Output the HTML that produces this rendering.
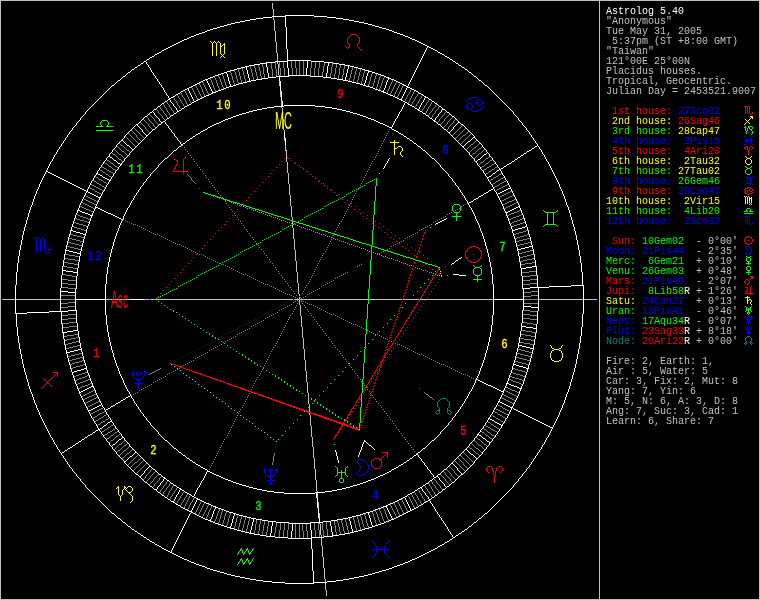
<!DOCTYPE html>
<html><head><meta charset="utf-8"><title>Astrolog 5.40</title>
<style>
html,body{margin:0;padding:0;background:#000;overflow:hidden}
#w{position:relative;width:760px;height:600px;background:#000;overflow:hidden;font-family:"Liberation Mono",monospace}
svg{position:absolute;left:0;top:0;will-change:transform}
#s{position:absolute;left:0;top:0;width:760px;height:600px;will-change:transform}
svg path,svg circle,svg rect{fill:none;stroke-width:1;shape-rendering:crispEdges}
svg text.hn{font:13.6px "Liberation Mono",monospace;letter-spacing:2.1px;stroke-width:.35px;paint-order:stroke}
svg text.ang{font:24.7px "Liberation Sans",sans-serif}
.l{position:absolute;left:606px;height:10px;font:10px/10px "Liberation Mono",monospace;white-space:pre;color:#c0c0c0}
</style></head><body><div id="w">
<svg width="760" height="600" viewBox="0 0 760 600" shape-rendering="crispEdges">
<path transform="translate(0 .5)" stroke="#c0c0c0" d="M2 299h595"/>
<path transform="translate(.5 0)" stroke="#c0c0c0" d="M272 3v6M273 9v11M274 20v11M275 31v11M276 42v11M277 53v11M278 64v11M279 75v11M280 86v11M281 97v11M282 108v11M283 119v11M284 130v11M285 141v10M286 151v11M287 162v11M288 173v11M289 184v11M290 195v11M291 206v11M292 217v11M293 228v11M294 239v11M295 250v11M296 261v11M297 272v11M298 283v11M299 294v11M300 305v11M301 316v11M302 327v11M303 338v11M304 349v11M305 360v11M306 371v11M307 382v11M308 393v11M309 404v11M310 415v11M311 426v11M312 437v10M313 447v11M314 458v11M315 469v11M316 480v11M317 491v11M318 502v11M319 513v11M320 524v11M321 535v11M322 546v11M323 557v11M324 568v11M325 579v11M326 590v6"/>
<path transform="translate(.5 0)" stroke="#fff" d="M421 488v1M422 489v2M423 491v1M424 492v1M425 493v2M426 495v1M427 496v1M428 497v2M429 499v1"/>
<path transform="translate(.5 0)" stroke="#808080" d="M424 485v1M425 486v2M426 488v1M427 489v2M428 491v1M429 492v2M430 494v1M431 495v2M432 497v1M428 483v1M429 484v2M430 486v1M431 487v2M432 489v2M433 491v1M434 492v2M435 494v1M431 481v1M432 482v2M433 484v1M434 485v1M435 486v2M436 488v1M437 489v1M438 490v2M439 492v1M434 479v1M435 480v1M436 481v2M437 483v1M438 484v1M439 485v1M440 486v2M441 488v1M442 489v1"/>
<path transform="translate(.5 0)" stroke="#fff" d="M437 476v1M438 477v1M439 478v2M440 480v1M441 481v1M442 482v1M443 483v1M444 484v2M445 486v1M446 487v1"/>
<path transform="translate(.5 0)" stroke="#808080" d="M440 474v1M441 475v1M442 476v1M443 477v1M444 478v1M445 479v2M446 481v1M447 482v1M448 483v1M449 484v1M443 471v1M444 472v1M445 473v2M446 475v1M447 476v1M448 477v1M449 478v1M450 479v2M451 481v1M452 482v1M446 469v1M447 470v1M448 471v1M449 472v1M450 473v1M451 474v2M452 476v1M453 477v1M454 478v1M455 479v1M449 466v1M450 467v1M451 468v1M452 469v1M453 470v1M454 471v2M455 473v1M456 474v1M457 475v1M458 476v1"/>
<path transform="translate(.5 0)" stroke="#fff" d="M452 463v1M453 464v1M454 465v1M455 466v1M456 467v1M457 468v2M458 470v1M459 471v1M460 472v1M461 473v1"/>
<path transform="translate(0 .5)" stroke="#808080" d="M455 461h1M456 462h1M457 463h1M458 464h1M459 465h1M460 466h1M461 467h1M462 468h1M463 469h1M464 470h1"/>
<path transform="translate(.5 0)" stroke="#808080" d="M458 458v1M459 459v1M460 460v1M461 461v1M462 462v1M463 463v2M464 465v1M465 466v1M466 467v1M467 468v1"/>
<path transform="translate(0 .5)" stroke="#808080" d="M460 455h1M461 456h1M462 457h1M463 458h1M464 459h1M465 460h1M466 461h1M467 462h1M468 463h1M469 464h1M470 465h1M463 452h1M464 453h1M465 454h1M466 455h1M467 456h1M468 457h1M469 458h1M470 459h1M471 460h1M472 461h1M473 462h1"/>
<path transform="translate(0 .5)" stroke="#fff" d="M466 449h1M467 450h1M468 451h1M469 452h1M470 453h1M471 454h2M473 455h1M474 456h1M475 457h1M476 458h1"/>
<path transform="translate(0 .5)" stroke="#808080" d="M468 446h1M469 447h1M470 448h2M472 449h1M473 450h1M474 451h1M475 452h1M476 453h2M478 454h1M479 455h1M471 443h1M472 444h1M473 445h1M474 446h1M475 447h1M476 448h2M478 449h1M479 450h1M480 451h1M481 452h1M474 440h1M475 441h1M476 442h1M477 443h1M478 444h1M479 445h2M481 446h1M482 447h1M483 448h1M484 449h1M476 437h1M477 438h1M478 439h2M480 440h1M481 441h1M482 442h1M483 443h1M484 444h2M486 445h1M487 446h1"/>
<path transform="translate(0 .5)" stroke="#fff" d="M478 434h1M479 435h2M481 436h1M482 437h1M483 438h2M485 439h1M486 440h1M487 441h2M489 442h1"/>
<path transform="translate(0 .5)" stroke="#808080" d="M481 431h1M482 432h2M484 433h1M485 434h1M486 435h2M488 436h1M489 437h1M490 438h2M492 439h1M483 428h1M484 429h2M486 430h1M487 431h1M488 432h2M490 433h1M491 434h1M492 435h2M494 436h1M485 425h1M486 426h2M488 427h2M490 428h1M491 429h2M493 430h2M495 431h2M497 432h1M487 421h1M488 422h2M490 423h1M491 424h2M493 425h1M494 426h2M496 427h1M497 428h2M499 429h1"/>
<path transform="translate(0 .5)" stroke="#fff" d="M489 418h1M490 419h2M492 420h2M494 421h1M495 422h2M497 423h2M499 424h2M501 425h1"/>
<path transform="translate(0 .5)" stroke="#808080" d="M492 415h1M493 416h2M495 417h1M496 418h2M498 419h2M500 420h1M501 421h2M503 422h1M494 411h1M495 412h2M497 413h1M498 414h2M500 415h2M502 416h1M503 417h2M505 418h1M495 408h1M496 409h2M498 410h2M500 411h2M502 412h2M504 413h2M506 414h2M497 404h1M498 405h2M500 406h2M502 407h1M503 408h2M505 409h2M507 410h2M509 411h1"/>
<path transform="translate(0 .5)" stroke="#fff" d="M499 401h1M500 402h2M502 403h2M504 404h2M506 405h2M508 406h2M510 407h2"/>
<path transform="translate(0 .5)" stroke="#808080" d="M501 397h1M502 398h2M504 399h2M506 400h2M508 401h2M510 402h2M512 403h2M503 394h1M504 395h2M506 396h2M508 397h2M510 398h2M512 399h2M514 400h2M504 390h2M506 391h2M508 392h2M510 393h2M512 394h2M514 395h2M516 396h2M506 387h2M508 388h2M510 389h2M512 390h3M515 391h2M517 392h2"/>
<path transform="translate(0 .5)" stroke="#fff" d="M507 383h2M509 384h2M511 385h3M514 386h3M517 387h2M519 388h2"/>
<path transform="translate(0 .5)" stroke="#808080" d="M509 379h2M511 380h2M513 381h3M516 382h3M519 383h2M521 384h2M510 376h2M512 377h3M515 378h4M519 379h3M522 380h2M511 372h2M513 373h3M516 374h4M520 375h3M523 376h2M513 368h2M515 369h3M518 370h4M522 371h3M525 372h2"/>
<path transform="translate(0 .5)" stroke="#fff" d="M514 364h2M516 365h3M519 366h4M523 367h3M526 368h2"/>
<path transform="translate(0 .5)" stroke="#808080" d="M515 361h3M518 362h4M522 363h4M526 364h3M516 357h3M519 358h4M523 359h4M527 360h3M517 353h3M520 354h4M524 355h4M528 356h3M518 349h3M521 350h4M525 351h4M529 352h3"/>
<path transform="translate(0 .5)" stroke="#fff" d="M519 345h3M522 346h4M526 347h4M530 348h3"/>
<path transform="translate(0 .5)" stroke="#808080" d="M520 342h4M524 343h6M530 344h4M520 338h4M524 339h7M531 340h4M521 334h4M525 335h6M531 336h4M522 330h4M526 331h6M532 332h4"/>
<path transform="translate(0 .5)" stroke="#fff" d="M522 326h4M526 327h7M533 328h4"/>
<path transform="translate(0 .5)" stroke="#808080" d="M523 322h4M527 323h6M533 324h4M523 318h7M530 319h8M523 314h7M530 315h8M523 310h7M530 311h8"/>
<path transform="translate(0 .5)" stroke="#fff" d="M524 306h7M531 307h7"/>
<path transform="translate(0 .5)" stroke="#808080" d="M524 303h14M524 299h14M531 295h7M524 296h7M531 291h7M524 292h7"/>
<path transform="translate(0 .5)" stroke="#fff" d="M530 287h8M523 288h7"/>
<path transform="translate(0 .5)" stroke="#808080" d="M530 283h8M523 284h7M530 279h8M523 280h7M530 275h7M523 276h7M529 271h8M522 272h7"/>
<path transform="translate(0 .5)" stroke="#fff" d="M532 266h4M526 267h6M522 268h4"/>
<path transform="translate(0 .5)" stroke="#808080" d="M532 262h4M525 263h7M521 264h4M532 258h3M527 259h5M523 260h4M520 261h3M531 254h3M527 255h4M523 256h4M520 257h3M530 250h3M526 251h4M522 252h4M519 253h3"/>
<path transform="translate(0 .5)" stroke="#fff" d="M529 246h3M525 247h4M521 248h4M518 249h3"/>
<path transform="translate(0 .5)" stroke="#808080" d="M528 242h3M524 243h4M520 244h4M517 245h3M527 238h3M523 239h4M519 240h4M516 241h3M527 234h2M524 235h3M520 236h4M517 237h3M515 238h2M526 230h2M523 231h3M519 232h4M516 233h3M514 234h2"/>
<path transform="translate(0 .5)" stroke="#fff" d="M525 226h2M522 227h3M518 228h4M515 229h3M513 230h2"/>
<path transform="translate(0 .5)" stroke="#808080" d="M523 222h2M520 223h3M517 224h3M514 225h3M512 226h2M522 218h2M520 219h2M517 220h3M514 221h3M512 222h2M510 223h2M521 214h2M519 215h2M516 216h3M513 217h3M511 218h2M509 219h2M519 210h2M517 211h2M514 212h3M511 213h3M509 214h2M507 215h2"/>
<path transform="translate(0 .5)" stroke="#fff" d="M518 206h2M516 207h2M514 208h2M512 209h2M510 210h2M508 211h2M506 212h2"/>
<path transform="translate(0 .5)" stroke="#808080" d="M516 202h2M514 203h2M512 204h2M510 205h2M508 206h2M506 207h2M504 208h2M514 199h2M512 200h2M509 201h3M507 202h2M505 203h2M503 204h2M512 195h2M510 196h2M508 197h2M506 198h2M504 199h2M502 200h2M501 201h1M510 191h2M508 192h2M506 193h2M504 194h2M502 195h2M500 196h2M499 197h1"/>
<path transform="translate(0 .5)" stroke="#fff" d="M510 187h1M508 188h2M506 189h2M504 190h2M502 191h2M500 192h2M498 193h2M497 194h1"/>
<path transform="translate(0 .5)" stroke="#808080" d="M507 184h2M505 185h2M503 186h2M501 187h2M499 188h2M497 189h2M496 190h1M506 180h1M504 181h2M502 182h2M500 183h2M499 184h1M497 185h2M495 186h2M494 187h1M503 177h1M501 178h2M500 179h1M498 180h2M496 181h2M495 182h1M493 183h2M492 184h1M501 173h1M499 174h2M498 175h1M496 176h2M494 177h2M493 178h1M491 179h2M490 180h1"/>
<path transform="translate(0 .5)" stroke="#fff" d="M499 169h1M497 170h2M496 171h1M495 172h1M493 173h2M492 174h1M491 175h1M489 176h2M488 177h1"/>
<path transform="translate(0 .5)" stroke="#808080" d="M497 166h1M495 167h2M494 168h1M492 169h2M491 170h1M489 171h2M488 172h1M486 173h2M485 174h1M494 163h1M492 164h2M491 165h1M489 166h2M487 167h2M486 168h1M484 169h2M483 170h1M492 159h1M490 160h2M489 161h1M488 162h1M486 163h2M485 164h1M484 165h1M482 166h2M481 167h1M489 156h1M488 157h1M486 158h2M485 159h1M484 160h1M483 161h1M481 162h2M480 163h1M479 164h1"/>
<path transform="translate(0 .5)" stroke="#fff" d="M487 152h1M486 153h1M484 154h2M483 155h1M482 156h1M481 157h1M480 158h1M478 159h2M477 160h1M476 161h1"/>
<path transform="translate(0 .5)" stroke="#808080" d="M484 149h1M483 150h1M482 151h1M481 152h1M479 153h2M478 154h1M477 155h1M476 156h1M475 157h1M474 158h1M482 146h1M481 147h1M479 148h2M478 149h1M477 150h1M476 151h1M475 152h1M473 153h2M472 154h1M471 155h1M479 143h1M478 144h1M477 145h1M476 146h1M474 147h2M473 148h1M472 149h1M471 150h1M470 151h1M469 152h1M476 140h1M475 141h1M474 142h1M473 143h1M471 144h2M470 145h1M469 146h1M468 147h1M467 148h1M466 149h1"/>
<path transform="translate(0 .5)" stroke="#fff" d="M473 137h1M472 138h1M471 139h1M470 140h1M468 141h2M467 142h1M466 143h1M465 144h1M464 145h1M463 146h1"/>
<path transform="translate(0 .5)" stroke="#808080" d="M470 134h1M469 135h1M468 136h1M467 137h1M466 138h1M465 139h1M464 140h1M463 141h1M462 142h1M461 143h1M468 131h1M467 132h1M466 133h1M465 134h1M463 135h2M462 136h1M461 137h1M460 138h1M459 139h1M458 140h1M465 128h1M464 129h1M463 130h1M462 131h1M461 132h1M460 133h1M459 134h1M458 135h1M457 136h1M456 137h1M455 138h1M462 125h1M461 126h1M460 127h1M459 128h1M458 129h1M457 130h1M456 131h1M455 132h1M454 133h1M453 134h1M452 135h1"/>
<path transform="translate(.5 0)" stroke="#fff" d="M449 132v1M450 131v1M451 130v1M452 129v1M453 127v2M454 126v1M455 125v1M456 124v1M457 123v1M458 122v1"/>
<path transform="translate(.5 0)" stroke="#808080" d="M446 130v1M447 129v1M448 127v2M449 126v1M450 125v1M451 124v1M452 123v1M453 121v2M454 120v1M455 119v1M443 127v1M444 126v1M445 125v1M446 124v1M447 122v2M448 121v1M449 120v1M450 119v1M451 118v1M452 117v1M440 124v1M441 123v1M442 122v1M443 121v1M444 119v2M445 118v1M446 117v1M447 116v1M448 115v1M449 114v1M437 122v1M438 121v1M439 119v2M440 118v1M441 117v1M442 116v1M443 115v1M444 113v2M445 112v1M446 111v1"/>
<path transform="translate(.5 0)" stroke="#fff" d="M434 120v1M435 118v2M436 117v1M437 116v1M438 114v2M439 113v1M440 112v1M441 110v2M442 109v1"/>
<path transform="translate(.5 0)" stroke="#808080" d="M431 117v1M432 115v2M433 114v1M434 113v1M435 111v2M436 110v1M437 109v1M438 107v2M439 106v1M428 115v1M429 113v2M430 112v1M431 111v1M432 109v2M433 108v1M434 107v1M435 105v2M436 104v1M425 113v1M426 111v2M427 109v2M428 107v2M429 106v1M430 104v2M431 102v2M432 101v1M421 111v1M422 109v2M423 108v1M424 106v2M425 105v1M426 103v2M427 102v1M428 100v2M429 99v1"/>
<path transform="translate(.5 0)" stroke="#fff" d="M418 109v1M419 107v2M420 105v2M421 103v2M422 102v1M423 100v2M424 98v2M425 97v1"/>
<path transform="translate(.5 0)" stroke="#808080" d="M415 106v1M416 104v2M417 103v1M418 101v2M419 99v2M420 98v1M421 96v2M422 95v1M411 104v1M412 102v2M413 101v1M414 99v2M415 97v2M416 96v1M417 94v2M418 93v1M408 102v2M409 100v2M410 98v2M411 96v2M412 94v2M413 92v2M414 91v1M404 101v1M405 99v2M406 97v2M407 95v2M408 94v1M409 92v2M410 90v2M411 89v1"/>
<path transform="translate(.5 0)" stroke="#fff" d="M401 98v2M402 96v2M403 94v2M404 92v2M405 90v2M406 88v2M407 87v1"/>
<path transform="translate(.5 0)" stroke="#808080" d="M397 96v2M398 94v2M399 92v2M400 90v2M401 88v2M402 86v2M403 85v1M394 94v2M395 92v2M396 90v2M397 88v2M398 86v2M399 84v2M400 83v1M390 93v2M391 91v2M392 89v2M393 87v2M394 85v2M395 83v2M396 81v2M387 91v2M388 89v2M389 86v3M390 84v2M391 82v2M392 80v2"/>
<path transform="translate(.5 0)" stroke="#fff" d="M383 90v2M384 88v2M385 85v3M386 82v3M387 80v2M388 78v2"/>
<path transform="translate(.5 0)" stroke="#808080" d="M379 88v2M380 86v2M381 83v3M382 80v3M383 78v2M384 76v2M376 87v2M377 84v3M378 80v4M379 77v3M380 75v2M372 86v2M373 83v3M374 79v4M375 76v3M376 74v2M368 84v2M369 81v3M370 77v4M371 74v3M372 72v2"/>
<path transform="translate(.5 0)" stroke="#fff" d="M364 83v2M365 80v3M366 76v4M367 73v3M368 71v2"/>
<path transform="translate(.5 0)" stroke="#808080" d="M361 81v3M362 77v4M363 73v4M364 70v3M357 80v3M358 76v4M359 72v4M360 69v3M353 79v3M354 75v4M355 71v4M356 68v3M349 78v3M350 74v4M351 70v4M352 67v3"/>
<path transform="translate(.5 0)" stroke="#fff" d="M345 77v3M346 73v4M347 69v4M348 66v3"/>
<path transform="translate(.5 0)" stroke="#808080" d="M342 75v4M343 69v6M344 65v4M338 75v4M339 68v7M340 64v4M334 74v4M335 68v6M336 64v4M330 73v4M331 67v6M332 63v4"/>
<path transform="translate(.5 0)" stroke="#fff" d="M326 73v4M327 66v7M328 62v4"/>
<path transform="translate(.5 0)" stroke="#808080" d="M322 72v4M323 66v6M324 62v4M318 68v8M319 61v7M314 68v8M315 61v7M310 68v8M311 61v7"/>
<path transform="translate(.5 0)" stroke="#fff" d="M306 68v7M307 61v7"/>
<path transform="translate(.5 0)" stroke="#808080" d="M303 61v14M299 61v14M295 61v7M296 68v7M291 61v7M292 68v7"/>
<path transform="translate(.5 0)" stroke="#fff" d="M287 61v7M288 68v8"/>
<path transform="translate(.5 0)" stroke="#808080" d="M283 61v7M284 68v8M279 61v7M280 68v8M275 62v7M276 69v7M271 62v7M272 69v8"/>
<path transform="translate(.5 0)" stroke="#fff" d="M266 63v4M267 67v6M268 73v4"/>
<path transform="translate(.5 0)" stroke="#808080" d="M262 63v4M263 67v7M264 74v4M258 64v3M259 67v4M260 71v5M261 76v3M254 65v3M255 68v4M256 72v4M257 76v3M250 66v3M251 69v4M252 73v4M253 77v3"/>
<path transform="translate(.5 0)" stroke="#fff" d="M246 67v3M247 70v4M248 74v4M249 78v3"/>
<path transform="translate(.5 0)" stroke="#808080" d="M242 68v3M243 71v4M244 75v4M245 79v3M238 69v3M239 72v4M240 76v4M241 80v3M234 70v2M235 72v3M236 75v4M237 79v3M238 82v2M230 71v2M231 73v3M232 76v4M233 80v3M234 83v2"/>
<path transform="translate(.5 0)" stroke="#fff" d="M226 72v2M227 74v3M228 77v4M229 81v3M230 84v2"/>
<path transform="translate(.5 0)" stroke="#808080" d="M222 74v2M223 76v3M224 79v3M225 82v3M226 85v2M218 75v2M219 77v2M220 79v3M221 82v3M222 85v2M223 87v2M214 76v2M215 78v2M216 80v3M217 83v3M218 86v2M219 88v2M210 78v2M211 80v2M212 82v3M213 85v3M214 88v2M215 90v2"/>
<path transform="translate(.5 0)" stroke="#fff" d="M206 79v2M207 81v2M208 83v2M209 85v2M210 87v2M211 89v2M212 91v2"/>
<path transform="translate(.5 0)" stroke="#808080" d="M202 81v2M203 83v2M204 85v2M205 87v2M206 89v2M207 91v2M208 93v2M199 83v2M200 85v2M201 87v2M202 89v3M203 92v2M204 94v2M195 85v1M196 86v2M197 88v2M198 90v2M199 92v2M200 94v2M201 96v2M191 87v1M192 88v2M193 90v2M194 92v2M195 94v2M196 96v2M197 98v2"/>
<path transform="translate(.5 0)" stroke="#fff" d="M187 88v1M188 89v2M189 91v2M190 93v2M191 95v2M192 97v2M193 99v2M194 101v1"/>
<path transform="translate(.5 0)" stroke="#808080" d="M184 90v1M185 91v2M186 93v2M187 95v2M188 97v2M189 99v2M190 101v2M180 92v1M181 93v2M182 95v2M183 97v1M184 98v2M185 100v2M186 102v2M187 104v1M177 95v1M178 96v2M179 98v1M180 99v2M181 101v2M182 103v1M183 104v2M184 106v1M173 97v1M174 98v2M175 100v1M176 101v2M177 103v2M178 105v1M179 106v2M180 108v1"/>
<path transform="translate(.5 0)" stroke="#fff" d="M169 99v1M170 100v2M171 102v1M172 103v1M173 104v2M174 106v1M175 107v1M176 108v2M177 110v1"/>
<path transform="translate(.5 0)" stroke="#808080" d="M166 101v1M167 102v2M168 104v1M169 105v2M170 107v1M171 108v2M172 110v1M173 111v2M174 113v1M163 104v1M164 105v2M165 107v1M166 108v2M167 110v2M168 112v1M169 113v2M170 115v1M159 106v1M160 107v2M161 109v1M162 110v1M163 111v2M164 113v1M165 114v1M166 115v2M167 117v1M156 109v1M157 110v1M158 111v2M159 113v1M160 114v1M161 115v1M162 116v2M163 118v1M164 119v1"/>
<path transform="translate(.5 0)" stroke="#fff" d="M152 111v1M153 112v1M154 113v2M155 115v1M156 116v1M157 117v1M158 118v1M159 119v2M160 121v1M161 122v1"/>
<path transform="translate(.5 0)" stroke="#808080" d="M149 114v1M150 115v1M151 116v1M152 117v1M153 118v1M154 119v2M155 121v1M156 122v1M157 123v1M158 124v1M146 116v1M147 117v1M148 118v2M149 120v1M150 121v1M151 122v1M152 123v1M153 124v2M154 126v1M155 127v1M143 119v1M144 120v1M145 121v1M146 122v1M147 123v1M148 124v2M149 126v1M150 127v1M151 128v1M152 129v1M140 122v1M141 123v1M142 124v1M143 125v1M144 126v1M145 127v2M146 129v1M147 130v1M148 131v1M149 132v1"/>
<path transform="translate(.5 0)" stroke="#fff" d="M137 125v1M138 126v1M139 127v1M140 128v1M141 129v1M142 130v2M143 132v1M144 133v1M145 134v1M146 135v1"/>
<path transform="translate(0 .5)" stroke="#808080" d="M134 128h1M135 129h1M136 130h1M137 131h1M138 132h1M139 133h1M140 134h1M141 135h1M142 136h1M143 137h1"/>
<path transform="translate(.5 0)" stroke="#808080" d="M131 130v1M132 131v1M133 132v1M134 133v1M135 134v1M136 135v2M137 137v1M138 138v1M139 139v1M140 140v1"/>
<path transform="translate(0 .5)" stroke="#808080" d="M128 133h1M129 134h1M130 135h1M131 136h1M132 137h1M133 138h1M134 139h1M135 140h1M136 141h1M137 142h1M138 143h1M125 136h1M126 137h1M127 138h1M128 139h1M129 140h1M130 141h1M131 142h1M132 143h1M133 144h1M134 145h1M135 146h1"/>
<path transform="translate(0 .5)" stroke="#fff" d="M122 140h1M123 141h1M124 142h1M125 143h1M126 144h1M127 145h2M129 146h1M130 147h1M131 148h1M132 149h1"/>
<path transform="translate(0 .5)" stroke="#808080" d="M119 143h1M120 144h1M121 145h2M123 146h1M124 147h1M125 148h1M126 149h1M127 150h2M129 151h1M130 152h1M117 146h1M118 147h1M119 148h1M120 149h1M121 150h1M122 151h2M124 152h1M125 153h1M126 154h1M127 155h1M114 149h1M115 150h1M116 151h1M117 152h1M118 153h1M119 154h2M121 155h1M122 156h1M123 157h1M124 158h1M111 152h1M112 153h1M113 154h2M115 155h1M116 156h1M117 157h1M118 158h1M119 159h2M121 160h1M122 161h1"/>
<path transform="translate(0 .5)" stroke="#fff" d="M109 156h1M110 157h2M112 158h1M113 159h1M114 160h2M116 161h1M117 162h1M118 163h2M120 164h1"/>
<path transform="translate(0 .5)" stroke="#808080" d="M106 159h1M107 160h2M109 161h1M110 162h1M111 163h2M113 164h1M114 165h1M115 166h2M117 167h1M104 162h1M105 163h2M107 164h1M108 165h1M109 166h2M111 167h1M112 168h1M113 169h2M115 170h1M101 166h1M102 167h2M104 168h2M106 169h1M107 170h2M109 171h2M111 172h2M113 173h1M99 169h1M100 170h2M102 171h1M103 172h2M105 173h1M106 174h2M108 175h1M109 176h2M111 177h1"/>
<path transform="translate(0 .5)" stroke="#fff" d="M97 173h1M98 174h2M100 175h2M102 176h1M103 177h2M105 178h2M107 179h2M109 180h1"/>
<path transform="translate(0 .5)" stroke="#808080" d="M95 176h1M96 177h2M98 178h1M99 179h2M101 180h2M103 181h1M104 182h2M106 183h1M93 180h1M94 181h2M96 182h1M97 183h2M99 184h2M101 185h1M102 186h2M104 187h1M91 184h1M92 185h2M94 186h2M96 187h2M98 188h2M100 189h2M102 190h2M89 187h1M90 188h2M92 189h2M94 190h1M95 191h2M97 192h2M99 193h2M101 194h1"/>
<path transform="translate(0 .5)" stroke="#fff" d="M87 191h1M88 192h2M90 193h2M92 194h2M94 195h2M96 196h2M98 197h2"/>
<path transform="translate(0 .5)" stroke="#808080" d="M85 195h1M86 196h2M88 197h2M90 198h2M92 199h2M94 200h2M96 201h2M83 198h1M84 199h2M86 200h2M88 201h2M90 202h2M92 203h2M94 204h2M81 202h2M83 203h2M85 204h2M87 205h2M89 206h2M91 207h2M93 208h2M80 206h2M82 207h2M84 208h2M86 209h3M89 210h2M91 211h2"/>
<path transform="translate(0 .5)" stroke="#fff" d="M78 210h2M80 211h2M82 212h3M85 213h3M88 214h2M90 215h2"/>
<path transform="translate(0 .5)" stroke="#808080" d="M76 214h2M78 215h2M80 216h3M83 217h3M86 218h2M88 219h2M75 218h2M77 219h3M80 220h4M84 221h3M87 222h2M74 222h2M76 223h3M79 224h4M83 225h3M86 226h2M72 226h2M74 227h3M77 228h4M81 229h3M84 230h2"/>
<path transform="translate(0 .5)" stroke="#fff" d="M71 230h2M73 231h3M76 232h4M80 233h3M83 234h2"/>
<path transform="translate(0 .5)" stroke="#808080" d="M70 234h3M73 235h4M77 236h4M81 237h3M69 238h3M72 239h4M76 240h4M80 241h3M68 242h3M71 243h4M75 244h4M79 245h3M67 246h3M70 247h4M74 248h4M78 249h3"/>
<path transform="translate(0 .5)" stroke="#fff" d="M66 250h3M69 251h4M73 252h4M77 253h3"/>
<path transform="translate(0 .5)" stroke="#808080" d="M65 254h4M69 255h6M75 256h4M64 258h4M68 259h7M75 260h4M64 262h4M68 263h6M74 264h4M63 266h4M67 267h6M73 268h4"/>
<path transform="translate(0 .5)" stroke="#fff" d="M62 270h4M66 271h7M73 272h4"/>
<path transform="translate(0 .5)" stroke="#808080" d="M62 274h4M66 275h6M72 276h4M61 279h7M68 280h8M61 283h7M68 284h8M61 287h7M68 288h8"/>
<path transform="translate(0 .5)" stroke="#fff" d="M61 291h7M68 292h7"/>
<path transform="translate(0 .5)" stroke="#808080" d="M61 295h14M61 299h14M68 302h7M61 303h7M68 306h7M61 307h7"/>
<path transform="translate(0 .5)" stroke="#fff" d="M68 310h8M61 311h7"/>
<path transform="translate(0 .5)" stroke="#808080" d="M68 314h8M61 315h7M68 318h8M61 319h7M69 322h7M62 323h7M69 326h8M62 327h7"/>
<path transform="translate(0 .5)" stroke="#fff" d="M73 330h4M67 331h6M63 332h4"/>
<path transform="translate(0 .5)" stroke="#808080" d="M74 334h4M67 335h7M63 336h4M76 337h3M71 338h5M67 339h4M64 340h3M76 341h3M72 342h4M68 343h4M65 344h3M77 345h3M73 346h4M69 347h4M66 348h3"/>
<path transform="translate(0 .5)" stroke="#fff" d="M78 349h3M74 350h4M70 351h4M67 352h3"/>
<path transform="translate(0 .5)" stroke="#808080" d="M79 353h3M75 354h4M71 355h4M68 356h3M80 357h3M76 358h4M72 359h4M69 360h3M82 360h2M79 361h3M75 362h4M72 363h3M70 364h2M83 364h2M80 365h3M76 366h4M73 367h3M71 368h2"/>
<path transform="translate(0 .5)" stroke="#fff" d="M84 368h2M81 369h3M77 370h4M74 371h3M72 372h2"/>
<path transform="translate(0 .5)" stroke="#808080" d="M85 372h2M82 373h3M79 374h3M76 375h3M74 376h2M87 375h2M85 376h2M82 377h3M79 378h3M77 379h2M75 380h2M88 379h2M86 380h2M83 381h3M80 382h3M78 383h2M76 384h2M90 383h2M88 384h2M85 385h3M82 386h3M80 387h2M78 388h2"/>
<path transform="translate(0 .5)" stroke="#fff" d="M91 386h2M89 387h2M87 388h2M85 389h2M83 390h2M81 391h2M79 392h2"/>
<path transform="translate(0 .5)" stroke="#808080" d="M93 390h2M91 391h2M89 392h2M87 393h2M85 394h2M83 395h2M81 396h2M94 394h2M92 395h2M89 396h3M87 397h2M85 398h2M83 399h2M96 397h2M94 398h2M92 399h2M90 400h2M88 401h2M86 402h2M85 403h1M98 401h2M96 402h2M94 403h2M92 404h2M90 405h2M88 406h2M87 407h1"/>
<path transform="translate(0 .5)" stroke="#fff" d="M101 404h1M99 405h2M97 406h2M95 407h2M93 408h2M91 409h2M89 410h2M88 411h1"/>
<path transform="translate(0 .5)" stroke="#808080" d="M101 408h2M99 409h2M97 410h2M95 411h2M93 412h2M91 413h2M90 414h1M104 411h1M102 412h2M100 413h2M98 414h2M97 415h1M95 416h2M93 417h2M92 418h1M106 414h1M104 415h2M103 416h1M101 417h2M99 418h2M98 419h1M96 420h2M95 421h1M108 418h1M106 419h2M105 420h1M103 421h2M101 422h2M100 423h1M98 424h2M97 425h1"/>
<path transform="translate(0 .5)" stroke="#fff" d="M110 421h1M108 422h2M107 423h1M106 424h1M104 425h2M103 426h1M102 427h1M100 428h2M99 429h1"/>
<path transform="translate(0 .5)" stroke="#808080" d="M113 424h1M111 425h2M110 426h1M108 427h2M107 428h1M105 429h2M104 430h1M102 431h2M101 432h1M115 428h1M113 429h2M112 430h1M110 431h2M108 432h2M107 433h1M105 434h2M104 435h1M117 431h1M115 432h2M114 433h1M113 434h1M111 435h2M110 436h1M109 437h1M107 438h2M106 439h1M119 434h1M118 435h1M116 436h2M115 437h1M114 438h1M113 439h1M111 440h2M110 441h1M109 442h1"/>
<path transform="translate(0 .5)" stroke="#fff" d="M122 437h1M121 438h1M119 439h2M118 440h1M117 441h1M116 442h1M115 443h1M113 444h2M112 445h1M111 446h1"/>
<path transform="translate(0 .5)" stroke="#808080" d="M124 440h1M123 441h1M122 442h1M121 443h1M119 444h2M118 445h1M117 446h1M116 447h1M115 448h1M114 449h1M127 443h1M126 444h1M124 445h2M123 446h1M122 447h1M121 448h1M120 449h1M118 450h2M117 451h1M116 452h1M129 446h1M128 447h1M127 448h1M126 449h1M124 450h2M123 451h1M122 452h1M121 453h1M120 454h1M119 455h1M132 449h1M131 450h1M130 451h1M129 452h1M127 453h2M126 454h1M125 455h1M124 456h1M123 457h1M122 458h1"/>
<path transform="translate(0 .5)" stroke="#fff" d="M135 452h1M134 453h1M133 454h1M132 455h1M130 456h2M129 457h1M128 458h1M127 459h1M126 460h1M125 461h1"/>
<path transform="translate(0 .5)" stroke="#808080" d="M137 455h1M136 456h1M135 457h1M134 458h1M133 459h1M132 460h1M131 461h1M130 462h1M129 463h1M128 464h1M140 458h1M139 459h1M138 460h1M137 461h1M135 462h2M134 463h1M133 464h1M132 465h1M131 466h1M130 467h1M143 460h1M142 461h1M141 462h1M140 463h1M139 464h1M138 465h1M137 466h1M136 467h1M135 468h1M134 469h1M133 470h1M146 463h1M145 464h1M144 465h1M143 466h1M142 467h1M141 468h1M140 469h1M139 470h1M138 471h1M137 472h1M136 473h1"/>
<path transform="translate(.5 0)" stroke="#fff" d="M140 476v1M141 475v1M142 474v1M143 473v1M144 471v2M145 470v1M146 469v1M147 468v1M148 467v1M149 466v1"/>
<path transform="translate(.5 0)" stroke="#808080" d="M143 479v1M144 478v1M145 476v2M146 475v1M147 474v1M148 473v1M149 472v1M150 470v2M151 469v1M152 468v1M146 481v1M147 480v1M148 479v1M149 478v1M150 476v2M151 475v1M152 474v1M153 473v1M154 472v1M155 471v1M149 484v1M150 483v1M151 482v1M152 481v1M153 479v2M154 478v1M155 477v1M156 476v1M157 475v1M158 474v1M152 487v1M153 486v1M154 484v2M155 483v1M156 482v1M157 481v1M158 480v1M159 478v2M160 477v1M161 476v1"/>
<path transform="translate(.5 0)" stroke="#fff" d="M156 489v1M157 487v2M158 486v1M159 485v1M160 483v2M161 482v1M162 481v1M163 479v2M164 478v1"/>
<path transform="translate(.5 0)" stroke="#808080" d="M159 492v1M160 490v2M161 489v1M162 488v1M163 486v2M164 485v1M165 484v1M166 482v2M167 481v1M162 494v1M163 492v2M164 491v1M165 490v1M166 488v2M167 487v1M168 486v1M169 484v2M170 483v1M166 497v1M167 495v2M168 493v2M169 491v2M170 490v1M171 488v2M172 486v2M173 485v1M169 499v1M170 497v2M171 496v1M172 494v2M173 493v1M174 491v2M175 490v1M176 488v2M177 487v1"/>
<path transform="translate(.5 0)" stroke="#fff" d="M173 501v1M174 499v2M175 497v2M176 495v2M177 494v1M178 492v2M179 490v2M180 489v1"/>
<path transform="translate(.5 0)" stroke="#808080" d="M176 503v1M177 501v2M178 500v1M179 498v2M180 496v2M181 495v1M182 493v2M183 492v1M180 505v1M181 503v2M182 502v1M183 500v2M184 498v2M185 497v1M186 495v2M187 494v1M184 506v2M185 504v2M186 502v2M187 500v2M188 498v2M189 496v2M190 495v1M187 509v1M188 507v2M189 505v2M190 503v2M191 502v1M192 500v2M193 498v2M194 497v1"/>
<path transform="translate(.5 0)" stroke="#fff" d="M191 510v2M192 508v2M193 506v2M194 504v2M195 502v2M196 500v2M197 499v1"/>
<path transform="translate(.5 0)" stroke="#808080" d="M195 512v2M196 510v2M197 508v2M198 506v2M199 504v2M200 502v2M201 501v1M198 514v2M199 512v2M200 510v2M201 508v2M202 506v2M203 504v2M204 503v1M202 516v2M203 514v2M204 512v2M205 510v2M206 508v2M207 506v2M208 504v2M206 517v2M207 515v2M208 512v3M209 510v2M210 508v2M211 506v2"/>
<path transform="translate(.5 0)" stroke="#fff" d="M210 519v2M211 517v2M212 514v3M213 511v3M214 509v2M215 507v2"/>
<path transform="translate(.5 0)" stroke="#808080" d="M214 521v2M215 519v2M216 516v3M217 513v3M218 511v2M219 509v2M218 522v2M219 519v3M220 515v4M221 512v3M222 510v2M222 523v2M223 520v3M224 516v4M225 513v3M226 511v2M226 525v2M227 522v3M228 518v4M229 515v3M230 513v2"/>
<path transform="translate(.5 0)" stroke="#fff" d="M230 526v2M231 523v3M232 519v4M233 516v3M234 514v2"/>
<path transform="translate(.5 0)" stroke="#808080" d="M234 526v3M235 522v4M236 518v4M237 515v3M238 527v3M239 523v4M240 519v4M241 516v3M242 528v3M243 524v4M244 520v4M245 517v3M246 529v3M247 525v4M248 521v4M249 518v3"/>
<path transform="translate(.5 0)" stroke="#fff" d="M250 530v3M251 526v4M252 522v4M253 519v3"/>
<path transform="translate(.5 0)" stroke="#808080" d="M254 530v4M255 524v6M256 520v4M258 531v4M259 524v7M260 520v4M262 531v4M263 525v6M264 521v4M266 532v4M267 526v6M268 522v4"/>
<path transform="translate(.5 0)" stroke="#fff" d="M270 533v4M271 526v7M272 522v4"/>
<path transform="translate(.5 0)" stroke="#808080" d="M274 533v4M275 527v6M276 523v4M279 530v8M280 523v7M283 530v8M284 523v7M287 530v8M288 523v7"/>
<path transform="translate(.5 0)" stroke="#fff" d="M291 531v7M292 524v7"/>
<path transform="translate(.5 0)" stroke="#808080" d="M295 524v14M299 524v14M302 524v7M303 531v7M306 524v7M307 531v7"/>
<path transform="translate(.5 0)" stroke="#fff" d="M310 523v7M311 530v8"/>
<path transform="translate(.5 0)" stroke="#808080" d="M314 523v7M315 530v8M318 523v7M319 530v8M322 523v7M323 530v7M326 522v7M327 529v8"/>
<path transform="translate(.5 0)" stroke="#fff" d="M330 522v4M331 526v6M332 532v4"/>
<path transform="translate(.5 0)" stroke="#808080" d="M334 521v4M335 525v7M336 532v4M337 520v3M338 523v4M339 527v5M340 532v3M341 520v3M342 523v4M343 527v4M344 531v3M345 519v3M346 522v4M347 526v4M348 530v3"/>
<path transform="translate(.5 0)" stroke="#fff" d="M349 518v3M350 521v4M351 525v4M352 529v3"/>
<path transform="translate(.5 0)" stroke="#808080" d="M353 517v3M354 520v4M355 524v4M356 528v3M357 516v3M358 519v4M359 523v4M360 527v3M360 515v2M361 517v3M362 520v4M363 524v3M364 527v2M364 514v2M365 516v3M366 519v4M367 523v3M368 526v2"/>
<path transform="translate(.5 0)" stroke="#fff" d="M368 513v2M369 515v3M370 518v4M371 522v3M372 525v2"/>
<path transform="translate(.5 0)" stroke="#808080" d="M372 512v2M373 514v3M374 517v3M375 520v3M376 523v2M375 510v2M376 512v2M377 514v3M378 517v3M379 520v2M380 522v2M379 509v2M380 511v2M381 513v3M382 516v3M383 519v2M384 521v2M383 507v2M384 509v2M385 511v3M386 514v3M387 517v2M388 519v2"/>
<path transform="translate(.5 0)" stroke="#fff" d="M386 506v2M387 508v2M388 510v2M389 512v2M390 514v2M391 516v2M392 518v2"/>
<path transform="translate(.5 0)" stroke="#808080" d="M390 504v2M391 506v2M392 508v2M393 510v2M394 512v2M395 514v2M396 516v2M394 503v2M395 505v2M396 507v2M397 509v3M398 512v2M399 514v2M397 501v1M398 502v2M399 504v2M400 506v2M401 508v2M402 510v2M403 512v2M401 499v1M402 500v2M403 502v2M404 504v2M405 506v2M406 508v2M407 510v2"/>
<path transform="translate(.5 0)" stroke="#fff" d="M404 497v1M405 498v2M406 500v2M407 502v2M408 504v2M409 506v2M410 508v2M411 510v1"/>
<path transform="translate(.5 0)" stroke="#808080" d="M408 496v1M409 497v2M410 499v2M411 501v2M412 503v2M413 505v2M414 507v2M411 494v1M412 495v2M413 497v2M414 499v1M415 500v2M416 502v2M417 504v2M418 506v1M414 492v1M415 493v2M416 495v1M417 496v2M418 498v2M419 500v1M420 501v2M421 503v1M418 490v1M419 491v2M420 493v1M421 494v2M422 496v2M423 498v1M424 499v2M425 501v1"/>
<path transform="translate(0 .5)" stroke="#fff" d="M285 15h29M272 16h13M314 16h13M263 17h9M327 17h9M256 18h7M336 18h7M250 19h6M343 19h6M245 20h5M349 20h5M240 21h5M354 21h5M235 22h5M359 22h5M231 23h4M364 23h4M227 24h4M368 24h4M224 25h3M372 25h3M220 26h4M375 26h4M217 27h3M379 27h3M213 28h4M382 28h4M210 29h3M386 29h3M207 30h3M389 30h3M205 31h2M392 31h2M202 32h3M394 32h3M199 33h3M397 33h3M196 34h3M400 34h3M194 35h2M403 35h2M191 36h3M405 36h3M189 37h2M408 37h2M187 38h2M410 38h2M184 39h3M412 39h3M182 40h2M415 40h2M180 41h2M417 41h2M178 42h2M419 42h2M176 43h2M421 43h2M174 44h2M423 44h2M172 45h2M425 45h2M170 46h2M427 46h2M168 47h2M429 47h2M166 48h2M431 48h2M164 49h2M433 49h2M162 50h2M435 50h2M161 51h1M437 51h1M159 52h2M438 52h2M157 53h2M440 53h2M155 54h2M442 54h2M154 55h1M444 55h1M152 56h2M445 56h2M150 57h2M447 57h2M149 58h1M449 58h1M147 59h2M450 59h2M146 60h1M452 60h1M144 61h2M453 61h2M143 62h1M455 62h1M141 63h2M456 63h2M140 64h1M458 64h1M138 65h2M459 65h2M137 66h1M461 66h1M135 67h2M462 67h2M134 68h1M464 68h1M132 69h2M465 69h2M131 70h1M467 70h1M130 71h1M468 71h1M128 72h2M469 72h2M127 73h1M471 73h1M126 74h1M472 74h1M125 75h1M473 75h1M123 76h2M474 76h2M122 77h1M476 77h1M121 78h1M477 78h1M120 79h1M478 79h1M118 80h2M479 80h2M117 81h1M481 81h1M116 82h1M482 82h1M115 83h1M483 83h1M114 84h1M484 84h1M112 85h2M485 85h2M111 86h1M487 86h1M110 87h1M488 87h1M109 88h1M489 88h1M108 89h1M490 89h1M107 90h1M491 90h1M106 91h1M492 91h1M105 92h1M493 92h1M104 93h1M494 93h1M103 94h1M495 94h1M102 95h1M496 95h1M101 96h1M497 96h1M100 97h1M498 97h1M99 98h1M499 98h1M99 500h1M499 500h1M100 501h1M498 501h1M101 502h1M497 502h1M102 503h1M496 503h1M103 504h1M495 504h1M104 505h1M494 505h1M105 506h1M493 506h1M106 507h1M492 507h1M107 508h1M491 508h1M108 509h1M490 509h1M109 510h1M489 510h1M110 511h1M488 511h1M111 512h1M487 512h1M112 513h2M485 513h2M114 514h1M484 514h1M115 515h1M483 515h1M116 516h1M482 516h1M117 517h1M481 517h1M118 518h2M479 518h2M120 519h1M478 519h1M121 520h1M477 520h1M122 521h1M476 521h1M123 522h2M474 522h2M125 523h1M473 523h1M126 524h1M472 524h1M127 525h1M471 525h1M128 526h2M469 526h2M130 527h1M468 527h1M131 528h1M467 528h1M132 529h2M465 529h2M134 530h1M464 530h1M135 531h2M462 531h2M137 532h1M461 532h1M138 533h2M459 533h2M140 534h1M458 534h1M141 535h2M456 535h2M143 536h1M455 536h1M144 537h2M453 537h2M146 538h1M452 538h1M147 539h2M450 539h2M149 540h1M449 540h1M150 541h2M447 541h2M152 542h2M445 542h2M154 543h1M444 543h1M155 544h2M442 544h2M157 545h2M440 545h2M159 546h2M438 546h2M161 547h1M437 547h1M162 548h2M435 548h2M164 549h2M433 549h2M166 550h2M431 550h2M168 551h2M429 551h2M170 552h2M427 552h2M172 553h2M425 553h2M174 554h2M423 554h2M176 555h2M421 555h2M178 556h2M419 556h2M180 557h2M417 557h2M182 558h2M415 558h2M184 559h3M412 559h3M187 560h2M410 560h2M189 561h2M408 561h2M191 562h3M405 562h3M194 563h2M403 563h2M196 564h3M400 564h3M199 565h3M397 565h3M202 566h3M394 566h3M205 567h2M392 567h2M207 568h3M389 568h3M210 569h3M386 569h3M213 570h4M382 570h4M217 571h3M379 571h3M220 572h4M375 572h4M224 573h3M372 573h3M227 574h4M368 574h4M231 575h4M364 575h4M235 576h5M359 576h5M240 577h5M354 577h5M245 578h5M349 578h5M250 579h6M343 579h6M256 580h7M336 580h7M263 581h9M327 581h9M272 582h13M314 582h13M285 583h29"/>
<path transform="translate(.5 0)" stroke="#fff" d="M15 285v29M16 272v13M16 314v13M17 263v9M17 327v9M18 256v7M18 336v7M19 250v6M19 343v6M20 245v5M20 349v5M21 240v5M21 354v5M22 235v5M22 359v5M23 231v4M23 364v4M24 227v4M24 368v4M25 224v3M25 372v3M26 220v4M26 375v4M27 217v3M27 379v3M28 213v4M28 382v4M29 210v3M29 386v3M30 207v3M30 389v3M31 205v2M31 392v2M32 202v3M32 394v3M33 199v3M33 397v3M34 196v3M34 400v3M35 194v2M35 403v2M36 191v3M36 405v3M37 189v2M37 408v2M38 187v2M38 410v2M39 184v3M39 412v3M40 182v2M40 415v2M41 180v2M41 417v2M42 178v2M42 419v2M43 176v2M43 421v2M44 174v2M44 423v2M45 172v2M45 425v2M46 170v2M46 427v2M47 168v2M47 429v2M48 166v2M48 431v2M49 164v2M49 433v2M50 162v2M50 435v2M51 161v1M51 437v1M52 159v2M52 438v2M53 157v2M53 440v2M54 155v2M54 442v2M55 154v1M55 444v1M56 152v2M56 445v2M57 150v2M57 447v2M58 149v1M58 449v1M59 147v2M59 450v2M60 146v1M60 452v1M61 144v2M61 453v2M62 143v1M62 455v1M63 141v2M63 456v2M64 140v1M64 458v1M65 138v2M65 459v2M66 137v1M66 461v1M67 135v2M67 462v2M68 134v1M68 464v1M69 132v2M69 465v2M70 131v1M70 467v1M71 130v1M71 468v1M72 128v2M72 469v2M73 127v1M73 471v1M74 126v1M74 472v1M75 125v1M75 473v1M76 123v2M76 474v2M77 122v1M77 476v1M78 121v1M78 477v1M79 120v1M79 478v1M80 118v2M80 479v2M81 117v1M81 481v1M82 116v1M82 482v1M83 115v1M83 483v1M84 114v1M84 484v1M85 112v2M85 485v2M86 111v1M86 487v1M87 110v1M87 488v1M88 109v1M88 489v1M89 108v1M89 490v1M90 107v1M90 491v1M91 106v1M91 492v1M92 105v1M92 493v1M93 104v1M93 494v1M94 103v1M94 495v1M95 102v1M95 496v1M96 101v1M96 497v1M97 100v1M97 498v1M98 99v1M98 499v1M500 99v1M500 499v1M501 100v1M501 498v1M502 101v1M502 497v1M503 102v1M503 496v1M504 103v1M504 495v1M505 104v1M505 494v1M506 105v1M506 493v1M507 106v1M507 492v1M508 107v1M508 491v1M509 108v1M509 490v1M510 109v1M510 489v1M511 110v1M511 488v1M512 111v1M512 487v1M513 112v2M513 485v2M514 114v1M514 484v1M515 115v1M515 483v1M516 116v1M516 482v1M517 117v1M517 481v1M518 118v2M518 479v2M519 120v1M519 478v1M520 121v1M520 477v1M521 122v1M521 476v1M522 123v2M522 474v2M523 125v1M523 473v1M524 126v1M524 472v1M525 127v1M525 471v1M526 128v2M526 469v2M527 130v1M527 468v1M528 131v1M528 467v1M529 132v2M529 465v2M530 134v1M530 464v1M531 135v2M531 462v2M532 137v1M532 461v1M533 138v2M533 459v2M534 140v1M534 458v1M535 141v2M535 456v2M536 143v1M536 455v1M537 144v2M537 453v2M538 146v1M538 452v1M539 147v2M539 450v2M540 149v1M540 449v1M541 150v2M541 447v2M542 152v2M542 445v2M543 154v1M543 444v1M544 155v2M544 442v2M545 157v2M545 440v2M546 159v2M546 438v2M547 161v1M547 437v1M548 162v2M548 435v2M549 164v2M549 433v2M550 166v2M550 431v2M551 168v2M551 429v2M552 170v2M552 427v2M553 172v2M553 425v2M554 174v2M554 423v2M555 176v2M555 421v2M556 178v2M556 419v2M557 180v2M557 417v2M558 182v2M558 415v2M559 184v3M559 412v3M560 187v2M560 410v2M561 189v2M561 408v2M562 191v3M562 405v3M563 194v2M563 403v2M564 196v3M564 400v3M565 199v3M565 397v3M566 202v3M566 394v3M567 205v2M567 392v2M568 207v3M568 389v3M569 210v3M569 386v3M570 213v4M570 382v4M571 217v3M571 379v3M572 220v4M572 375v4M573 224v3M573 372v3M574 227v4M574 368v4M575 231v4M575 364v4M576 235v5M576 359v5M577 240v5M577 354v5M578 245v5M578 349v5M579 250v6M579 343v6M580 256v7M580 336v7M581 263v9M581 327v9M582 272v13M582 314v13M583 285v29"/>
<path transform="translate(0 .5)" stroke="#fff" d="M288 60h23M275 61h13M311 61h13M266 62h9M324 62h9M260 63h6M333 63h6M254 64h6M339 64h6M249 65h5M345 65h5M245 66h4M350 66h4M241 67h4M354 67h4M237 68h4M358 68h4M234 69h3M362 69h3M230 70h4M365 70h4M227 71h3M369 71h3M224 72h3M372 72h3M221 73h3M375 73h3M218 74h3M378 74h3M215 75h3M381 75h3M213 76h2M384 76h2M210 77h3M386 77h3M208 78h2M389 78h2M205 79h3M391 79h3M203 80h2M394 80h2M201 81h2M396 81h2M199 82h2M398 82h2M197 83h2M400 83h2M195 84h2M402 84h2M193 85h2M404 85h2M191 86h2M406 86h2M189 87h2M408 87h2M187 88h2M410 88h2M185 89h2M412 89h2M183 90h2M414 90h2M181 91h2M416 91h2M180 92h1M418 92h1M178 93h2M419 93h2M176 94h2M421 94h2M175 95h1M423 95h1M173 96h2M424 96h2M171 97h2M426 97h2M170 98h1M428 98h1M168 99h2M429 99h2M167 100h1M431 100h1M165 101h2M432 101h2M164 102h1M434 102h1M162 103h2M435 103h2M161 104h1M437 104h1M160 105h1M438 105h1M158 106h2M439 106h2M157 107h1M441 107h1M156 108h1M442 108h1M154 109h2M443 109h2M153 110h1M445 110h1M152 111h1M446 111h1M150 112h2M447 112h2M149 113h1M449 113h1M148 114h1M450 114h1M147 115h1M451 115h1M145 116h2M452 116h2M144 117h1M454 117h1M143 118h1M455 118h1M142 119h1M456 119h1M141 120h1M457 120h1M140 121h1M458 121h1M139 122h1M459 122h1M138 123h1M460 123h1M136 124h2M461 124h2M135 125h1M463 125h1M134 126h1M464 126h1M133 127h1M465 127h1M132 128h1M466 128h1M131 129h1M467 129h1M130 130h1M468 130h1M130 468h1M468 468h1M131 469h1M467 469h1M132 470h1M466 470h1M133 471h1M465 471h1M134 472h1M464 472h1M135 473h1M463 473h1M136 474h2M461 474h2M138 475h1M460 475h1M139 476h1M459 476h1M140 477h1M458 477h1M141 478h1M457 478h1M142 479h1M456 479h1M143 480h1M455 480h1M144 481h1M454 481h1M145 482h2M452 482h2M147 483h1M451 483h1M148 484h1M450 484h1M149 485h1M449 485h1M150 486h2M447 486h2M152 487h1M446 487h1M153 488h1M445 488h1M154 489h2M443 489h2M156 490h1M442 490h1M157 491h1M441 491h1M158 492h2M439 492h2M160 493h1M438 493h1M161 494h1M437 494h1M162 495h2M435 495h2M164 496h1M434 496h1M165 497h2M432 497h2M167 498h1M431 498h1M168 499h2M429 499h2M170 500h1M428 500h1M171 501h2M426 501h2M173 502h2M424 502h2M175 503h1M423 503h1M176 504h2M421 504h2M178 505h2M419 505h2M180 506h1M418 506h1M181 507h2M416 507h2M183 508h2M414 508h2M185 509h2M412 509h2M187 510h2M410 510h2M189 511h2M408 511h2M191 512h2M406 512h2M193 513h2M404 513h2M195 514h2M402 514h2M197 515h2M400 515h2M199 516h2M398 516h2M201 517h2M396 517h2M203 518h2M394 518h2M205 519h3M391 519h3M208 520h2M389 520h2M210 521h3M386 521h3M213 522h2M384 522h2M215 523h3M381 523h3M218 524h3M378 524h3M221 525h3M375 525h3M224 526h3M372 526h3M227 527h3M369 527h3M230 528h4M365 528h4M234 529h3M362 529h3M237 530h4M358 530h4M241 531h4M354 531h4M245 532h4M350 532h4M249 533h5M345 533h5M254 534h6M339 534h6M260 535h6M333 535h6M266 536h9M324 536h9M275 537h13M311 537h13M288 538h23"/>
<path transform="translate(.5 0)" stroke="#fff" d="M60 288v23M61 275v13M61 311v13M62 266v9M62 324v9M63 260v6M63 333v6M64 254v6M64 339v6M65 249v5M65 345v5M66 245v4M66 350v4M67 241v4M67 354v4M68 237v4M68 358v4M69 234v3M69 362v3M70 230v4M70 365v4M71 227v3M71 369v3M72 224v3M72 372v3M73 221v3M73 375v3M74 218v3M74 378v3M75 215v3M75 381v3M76 213v2M76 384v2M77 210v3M77 386v3M78 208v2M78 389v2M79 205v3M79 391v3M80 203v2M80 394v2M81 201v2M81 396v2M82 199v2M82 398v2M83 197v2M83 400v2M84 195v2M84 402v2M85 193v2M85 404v2M86 191v2M86 406v2M87 189v2M87 408v2M88 187v2M88 410v2M89 185v2M89 412v2M90 183v2M90 414v2M91 181v2M91 416v2M92 180v1M92 418v1M93 178v2M93 419v2M94 176v2M94 421v2M95 175v1M95 423v1M96 173v2M96 424v2M97 171v2M97 426v2M98 170v1M98 428v1M99 168v2M99 429v2M100 167v1M100 431v1M101 165v2M101 432v2M102 164v1M102 434v1M103 162v2M103 435v2M104 161v1M104 437v1M105 160v1M105 438v1M106 158v2M106 439v2M107 157v1M107 441v1M108 156v1M108 442v1M109 154v2M109 443v2M110 153v1M110 445v1M111 152v1M111 446v1M112 150v2M112 447v2M113 149v1M113 449v1M114 148v1M114 450v1M115 147v1M115 451v1M116 145v2M116 452v2M117 144v1M117 454v1M118 143v1M118 455v1M119 142v1M119 456v1M120 141v1M120 457v1M121 140v1M121 458v1M122 139v1M122 459v1M123 138v1M123 460v1M124 136v2M124 461v2M125 135v1M125 463v1M126 134v1M126 464v1M127 133v1M127 465v1M128 132v1M128 466v1M129 131v1M129 467v1M469 131v1M469 467v1M470 132v1M470 466v1M471 133v1M471 465v1M472 134v1M472 464v1M473 135v1M473 463v1M474 136v2M474 461v2M475 138v1M475 460v1M476 139v1M476 459v1M477 140v1M477 458v1M478 141v1M478 457v1M479 142v1M479 456v1M480 143v1M480 455v1M481 144v1M481 454v1M482 145v2M482 452v2M483 147v1M483 451v1M484 148v1M484 450v1M485 149v1M485 449v1M486 150v2M486 447v2M487 152v1M487 446v1M488 153v1M488 445v1M489 154v2M489 443v2M490 156v1M490 442v1M491 157v1M491 441v1M492 158v2M492 439v2M493 160v1M493 438v1M494 161v1M494 437v1M495 162v2M495 435v2M496 164v1M496 434v1M497 165v2M497 432v2M498 167v1M498 431v1M499 168v2M499 429v2M500 170v1M500 428v1M501 171v2M501 426v2M502 173v2M502 424v2M503 175v1M503 423v1M504 176v2M504 421v2M505 178v2M505 419v2M506 180v1M506 418v1M507 181v2M507 416v2M508 183v2M508 414v2M509 185v2M509 412v2M510 187v2M510 410v2M511 189v2M511 408v2M512 191v2M512 406v2M513 193v2M513 404v2M514 195v2M514 402v2M515 197v2M515 400v2M516 199v2M516 398v2M517 201v2M517 396v2M518 203v2M518 394v2M519 205v3M519 391v3M520 208v2M520 389v2M521 210v3M521 386v3M522 213v2M522 384v2M523 215v3M523 381v3M524 218v3M524 378v3M525 221v3M525 375v3M526 224v3M526 372v3M527 227v3M527 369v3M528 230v4M528 365v4M529 234v3M529 362v3M530 237v4M530 358v4M531 241v4M531 354v4M532 245v4M532 350v4M533 249v5M533 345v5M534 254v6M534 339v6M535 260v6M535 333v6M536 266v9M536 324v9M537 275v13M537 311v13M538 288v23"/>
<path transform="translate(0 .5)" stroke="#fff" d="M289 75h21M276 76h13M310 76h13M268 77h8M323 77h8M262 78h6M331 78h6M256 79h6M337 79h6M251 80h5M343 80h5M247 81h4M348 81h4M243 82h4M352 82h4M239 83h4M356 83h4M236 84h3M360 84h3M233 85h3M363 85h3M229 86h4M366 86h4M226 87h3M370 87h3M224 88h2M373 88h2M221 89h3M375 89h3M218 90h3M378 90h3M216 91h2M381 91h2M213 92h3M383 92h3M211 93h2M386 93h2M209 94h2M388 94h2M206 95h3M390 95h3M204 96h2M393 96h2M202 97h2M395 97h2M200 98h2M397 98h2M198 99h2M399 99h2M196 100h2M401 100h2M194 101h2M403 101h2M192 102h2M405 102h2M191 103h1M407 103h1M189 104h2M408 104h2M187 105h2M410 105h2M185 106h2M412 106h2M184 107h1M414 107h1M182 108h2M415 108h2M181 109h1M417 109h1M179 110h2M418 110h2M177 111h2M420 111h2M176 112h1M422 112h1M174 113h2M423 113h2M173 114h1M425 114h1M171 115h2M426 115h2M170 116h1M428 116h1M169 117h1M429 117h1M167 118h2M430 118h2M166 119h1M432 119h1M165 120h1M433 120h1M163 121h2M434 121h2M162 122h1M436 122h1M161 123h1M437 123h1M159 124h2M438 124h2M158 125h1M440 125h1M157 126h1M441 126h1M156 127h1M442 127h1M155 128h1M443 128h1M153 129h2M444 129h2M152 130h1M446 130h1M151 131h1M447 131h1M150 132h1M448 132h1M149 133h1M449 133h1M148 134h1M450 134h1M147 135h1M451 135h1M146 136h1M452 136h1M145 137h1M453 137h1M144 138h1M454 138h1M143 139h1M455 139h1M142 140h1M456 140h1M141 141h1M457 141h1M141 457h1M457 457h1M142 458h1M456 458h1M143 459h1M455 459h1M144 460h1M454 460h1M145 461h1M453 461h1M146 462h1M452 462h1M147 463h1M451 463h1M148 464h1M450 464h1M149 465h1M449 465h1M150 466h1M448 466h1M151 467h1M447 467h1M152 468h1M446 468h1M153 469h2M444 469h2M155 470h1M443 470h1M156 471h1M442 471h1M157 472h1M441 472h1M158 473h1M440 473h1M159 474h2M438 474h2M161 475h1M437 475h1M162 476h1M436 476h1M163 477h2M434 477h2M165 478h1M433 478h1M166 479h1M432 479h1M167 480h2M430 480h2M169 481h1M429 481h1M170 482h1M428 482h1M171 483h2M426 483h2M173 484h1M425 484h1M174 485h2M423 485h2M176 486h1M422 486h1M177 487h2M420 487h2M179 488h2M418 488h2M181 489h1M417 489h1M182 490h2M415 490h2M184 491h1M414 491h1M185 492h2M412 492h2M187 493h2M410 493h2M189 494h2M408 494h2M191 495h1M407 495h1M192 496h2M405 496h2M194 497h2M403 497h2M196 498h2M401 498h2M198 499h2M399 499h2M200 500h2M397 500h2M202 501h2M395 501h2M204 502h2M393 502h2M206 503h3M390 503h3M209 504h2M388 504h2M211 505h2M386 505h2M213 506h3M383 506h3M216 507h2M381 507h2M218 508h3M378 508h3M221 509h3M375 509h3M224 510h2M373 510h2M226 511h3M370 511h3M229 512h4M366 512h4M233 513h3M363 513h3M236 514h3M360 514h3M239 515h4M356 515h4M243 516h4M352 516h4M247 517h4M348 517h4M251 518h5M343 518h5M256 519h6M337 519h6M262 520h6M331 520h6M268 521h8M323 521h8M276 522h13M310 522h13M289 523h21"/>
<path transform="translate(.5 0)" stroke="#fff" d="M75 289v21M76 276v13M76 310v13M77 268v8M77 323v8M78 262v6M78 331v6M79 256v6M79 337v6M80 251v5M80 343v5M81 247v4M81 348v4M82 243v4M82 352v4M83 239v4M83 356v4M84 236v3M84 360v3M85 233v3M85 363v3M86 229v4M86 366v4M87 226v3M87 370v3M88 224v2M88 373v2M89 221v3M89 375v3M90 218v3M90 378v3M91 216v2M91 381v2M92 213v3M92 383v3M93 211v2M93 386v2M94 209v2M94 388v2M95 206v3M95 390v3M96 204v2M96 393v2M97 202v2M97 395v2M98 200v2M98 397v2M99 198v2M99 399v2M100 196v2M100 401v2M101 194v2M101 403v2M102 192v2M102 405v2M103 191v1M103 407v1M104 189v2M104 408v2M105 187v2M105 410v2M106 185v2M106 412v2M107 184v1M107 414v1M108 182v2M108 415v2M109 181v1M109 417v1M110 179v2M110 418v2M111 177v2M111 420v2M112 176v1M112 422v1M113 174v2M113 423v2M114 173v1M114 425v1M115 171v2M115 426v2M116 170v1M116 428v1M117 169v1M117 429v1M118 167v2M118 430v2M119 166v1M119 432v1M120 165v1M120 433v1M121 163v2M121 434v2M122 162v1M122 436v1M123 161v1M123 437v1M124 159v2M124 438v2M125 158v1M125 440v1M126 157v1M126 441v1M127 156v1M127 442v1M128 155v1M128 443v1M129 153v2M129 444v2M130 152v1M130 446v1M131 151v1M131 447v1M132 150v1M132 448v1M133 149v1M133 449v1M134 148v1M134 450v1M135 147v1M135 451v1M136 146v1M136 452v1M137 145v1M137 453v1M138 144v1M138 454v1M139 143v1M139 455v1M140 142v1M140 456v1M458 142v1M458 456v1M459 143v1M459 455v1M460 144v1M460 454v1M461 145v1M461 453v1M462 146v1M462 452v1M463 147v1M463 451v1M464 148v1M464 450v1M465 149v1M465 449v1M466 150v1M466 448v1M467 151v1M467 447v1M468 152v1M468 446v1M469 153v2M469 444v2M470 155v1M470 443v1M471 156v1M471 442v1M472 157v1M472 441v1M473 158v1M473 440v1M474 159v2M474 438v2M475 161v1M475 437v1M476 162v1M476 436v1M477 163v2M477 434v2M478 165v1M478 433v1M479 166v1M479 432v1M480 167v2M480 430v2M481 169v1M481 429v1M482 170v1M482 428v1M483 171v2M483 426v2M484 173v1M484 425v1M485 174v2M485 423v2M486 176v1M486 422v1M487 177v2M487 420v2M488 179v2M488 418v2M489 181v1M489 417v1M490 182v2M490 415v2M491 184v1M491 414v1M492 185v2M492 412v2M493 187v2M493 410v2M494 189v2M494 408v2M495 191v1M495 407v1M496 192v2M496 405v2M497 194v2M497 403v2M498 196v2M498 401v2M499 198v2M499 399v2M500 200v2M500 397v2M501 202v2M501 395v2M502 204v2M502 393v2M503 206v3M503 390v3M504 209v2M504 388v2M505 211v2M505 386v2M506 213v3M506 383v3M507 216v2M507 381v2M508 218v3M508 378v3M509 221v3M509 375v3M510 224v2M510 373v2M511 226v3M511 370v3M512 229v4M512 366v4M513 233v3M513 363v3M514 236v3M514 360v3M515 239v4M515 356v4M516 243v4M516 352v4M517 247v4M517 348v4M518 251v5M518 343v5M519 256v6M519 337v6M520 262v6M520 331v6M521 268v8M521 323v8M522 276v13M522 310v13M523 289v21"/>
<path transform="translate(0 .5)" stroke="#fff" d="M284 105h31M274 106h10M315 106h10M267 107h7M325 107h7M262 108h5M332 108h5M257 109h5M337 109h5M253 110h4M342 110h4M249 111h4M346 111h4M246 112h3M350 112h3M242 113h4M353 113h4M239 114h3M357 114h3M236 115h3M360 115h3M233 116h3M363 116h3M231 117h2M366 117h2M228 118h3M368 118h3M225 119h3M371 119h3M223 120h2M374 120h2M221 121h2M376 121h2M219 122h2M378 122h2M216 123h3M380 123h3M214 124h2M383 124h2M212 125h2M385 125h2M210 126h2M387 126h2M208 127h2M389 127h2M207 128h1M391 128h1M205 129h2M392 129h2M203 130h2M394 130h2M201 131h2M396 131h2M200 132h1M398 132h1M198 133h2M399 133h2M196 134h2M401 134h2M195 135h1M403 135h1M193 136h2M404 136h2M192 137h1M406 137h1M190 138h2M407 138h2M189 139h1M409 139h1M187 140h2M410 140h2M186 141h1M412 141h1M185 142h1M413 142h1M183 143h2M414 143h2M182 144h1M416 144h1M181 145h1M417 145h1M179 146h2M418 146h2M178 147h1M420 147h1M177 148h1M421 148h1M176 149h1M422 149h1M174 150h2M423 150h2M173 151h1M425 151h1M172 152h1M426 152h1M171 153h1M427 153h1M170 154h1M428 154h1M169 155h1M429 155h1M168 156h1M430 156h1M167 157h1M431 157h1M165 158h2M432 158h2M164 159h1M434 159h1M163 160h1M435 160h1M162 161h1M436 161h1M162 437h1M436 437h1M163 438h1M435 438h1M164 439h1M434 439h1M165 440h2M432 440h2M167 441h1M431 441h1M168 442h1M430 442h1M169 443h1M429 443h1M170 444h1M428 444h1M171 445h1M427 445h1M172 446h1M426 446h1M173 447h1M425 447h1M174 448h2M423 448h2M176 449h1M422 449h1M177 450h1M421 450h1M178 451h1M420 451h1M179 452h2M418 452h2M181 453h1M417 453h1M182 454h1M416 454h1M183 455h2M414 455h2M185 456h1M413 456h1M186 457h1M412 457h1M187 458h2M410 458h2M189 459h1M409 459h1M190 460h2M407 460h2M192 461h1M406 461h1M193 462h2M404 462h2M195 463h1M403 463h1M196 464h2M401 464h2M198 465h2M399 465h2M200 466h1M398 466h1M201 467h2M396 467h2M203 468h2M394 468h2M205 469h2M392 469h2M207 470h1M391 470h1M208 471h2M389 471h2M210 472h2M387 472h2M212 473h2M385 473h2M214 474h2M383 474h2M216 475h3M380 475h3M219 476h2M378 476h2M221 477h2M376 477h2M223 478h2M374 478h2M225 479h3M371 479h3M228 480h3M368 480h3M231 481h2M366 481h2M233 482h3M363 482h3M236 483h3M360 483h3M239 484h3M357 484h3M242 485h4M353 485h4M246 486h3M350 486h3M249 487h4M346 487h4M253 488h4M342 488h4M257 489h5M337 489h5M262 490h5M332 490h5M267 491h7M325 491h7M274 492h10M315 492h10M284 493h31"/>
<path transform="translate(.5 0)" stroke="#fff" d="M105 284v31M106 274v10M106 315v10M107 267v7M107 325v7M108 262v5M108 332v5M109 257v5M109 337v5M110 253v4M110 342v4M111 249v4M111 346v4M112 246v3M112 350v3M113 242v4M113 353v4M114 239v3M114 357v3M115 236v3M115 360v3M116 233v3M116 363v3M117 231v2M117 366v2M118 228v3M118 368v3M119 225v3M119 371v3M120 223v2M120 374v2M121 221v2M121 376v2M122 219v2M122 378v2M123 216v3M123 380v3M124 214v2M124 383v2M125 212v2M125 385v2M126 210v2M126 387v2M127 208v2M127 389v2M128 207v1M128 391v1M129 205v2M129 392v2M130 203v2M130 394v2M131 201v2M131 396v2M132 200v1M132 398v1M133 198v2M133 399v2M134 196v2M134 401v2M135 195v1M135 403v1M136 193v2M136 404v2M137 192v1M137 406v1M138 190v2M138 407v2M139 189v1M139 409v1M140 187v2M140 410v2M141 186v1M141 412v1M142 185v1M142 413v1M143 183v2M143 414v2M144 182v1M144 416v1M145 181v1M145 417v1M146 179v2M146 418v2M147 178v1M147 420v1M148 177v1M148 421v1M149 176v1M149 422v1M150 174v2M150 423v2M151 173v1M151 425v1M152 172v1M152 426v1M153 171v1M153 427v1M154 170v1M154 428v1M155 169v1M155 429v1M156 168v1M156 430v1M157 167v1M157 431v1M158 165v2M158 432v2M159 164v1M159 434v1M160 163v1M160 435v1M161 162v1M161 436v1M437 162v1M437 436v1M438 163v1M438 435v1M439 164v1M439 434v1M440 165v2M440 432v2M441 167v1M441 431v1M442 168v1M442 430v1M443 169v1M443 429v1M444 170v1M444 428v1M445 171v1M445 427v1M446 172v1M446 426v1M447 173v1M447 425v1M448 174v2M448 423v2M449 176v1M449 422v1M450 177v1M450 421v1M451 178v1M451 420v1M452 179v2M452 418v2M453 181v1M453 417v1M454 182v1M454 416v1M455 183v2M455 414v2M456 185v1M456 413v1M457 186v1M457 412v1M458 187v2M458 410v2M459 189v1M459 409v1M460 190v2M460 407v2M461 192v1M461 406v1M462 193v2M462 404v2M463 195v1M463 403v1M464 196v2M464 401v2M465 198v2M465 399v2M466 200v1M466 398v1M467 201v2M467 396v2M468 203v2M468 394v2M469 205v2M469 392v2M470 207v1M470 391v1M471 208v2M471 389v2M472 210v2M472 387v2M473 212v2M473 385v2M474 214v2M474 383v2M475 216v3M475 380v3M476 219v2M476 378v2M477 221v2M477 376v2M478 223v2M478 374v2M479 225v3M479 371v3M480 228v3M480 368v3M481 231v2M481 366v2M482 233v3M482 363v3M483 236v3M483 360v3M484 239v3M484 357v3M485 242v4M485 353v4M486 246v3M486 350v3M487 249v4M487 346v4M488 253v4M488 342v4M489 257v5M489 337v5M490 262v5M490 332v5M491 267v7M491 325v7M492 274v10M492 315v10M493 284v31M429 500v1M430 501v2M431 503v1M432 504v2M433 506v1M434 507v2M435 509v2M436 511v1M437 512v2M438 514v1M439 515v2M440 517v1M441 518v2M442 520v1M443 521v2M444 523v1M445 524v2M446 526v1M447 527v2M448 529v2M449 531v1M450 532v2M451 534v1M452 535v2M453 537v1"/>
<path transform="translate(0 .5)" stroke="#fff" d="M75 299h30"/>
<path transform="translate(0 .5)" stroke="#f00" d="M488 466h3M498 466h3M487 467h1M491 467h1M497 467h1M501 467h1M486 468h1M492 468h1M496 468h1M502 468h1M486 469h1M492 469h1M496 469h1M502 469h1M486 470h1M492 470h1M496 470h1M502 470h1M487 471h1M493 471h1M495 471h1M501 471h1M488 472h1M493 472h1M495 472h1M500 472h1M493 473h1M495 473h1M493 474h1M495 474h1M494 475h1M494 476h1M494 477h1M494 478h1M494 479h1M494 480h1M494 481h1M494 482h1"/>
<path transform="translate(0 .5)" stroke="#fff" d="M513 408h1M514 409h2M516 410h2M518 411h2M520 412h2M522 413h2M524 414h2M526 415h2M528 416h2M530 417h2M532 418h2M534 419h2M536 420h2M538 421h2M540 422h2M542 423h2M544 424h2M546 425h2M548 426h2M550 427h2M130 395h1M128 396h2M126 397h2M125 398h1M123 399h2M121 400h2M120 401h1M118 402h2M116 403h2M115 404h1M113 405h2M111 406h2M110 407h1M108 408h2M106 409h2M105 410h1"/>
<path transform="translate(0 .5)" stroke="#808080" d="M299 299h1M297 300h1M295 301h1M293 302h1M291 304h1M289 305h1M287 306h1M285 307h1M283 308h1M281 309h1M279 310h1M277 312h1M275 313h1M273 314h1M271 315h1M269 316h1M267 317h1M265 318h1M263 320h1M261 321h1M259 322h1M257 323h1M255 324h1M253 325h1M251 326h1M249 328h1M247 329h1M245 330h1M243 331h1M241 332h1M239 333h1M237 334h1M235 336h1M233 337h1M231 338h1M229 339h1M227 340h1M225 341h1M223 342h1M221 344h1M219 345h1M217 346h1M215 347h1M213 348h1M211 349h1M209 350h1M207 352h1M205 353h1M203 354h1M201 355h1M199 356h1M197 357h1M195 358h1M193 360h1M191 361h1M189 362h1M187 363h1M185 364h1M183 365h1M181 366h1M179 368h1M177 369h1M175 370h1M173 371h1M171 372h1M169 373h1M167 374h1M165 376h1M163 377h1M161 378h1M159 379h1M157 380h1M155 381h1M153 382h1M151 384h1M149 385h1M147 386h1M145 387h1M143 388h1M141 389h1M139 390h1M137 392h1M135 393h1M133 394h1M131 395h1"/>
<path transform="translate(.5 0)" stroke="#ff0" d="M550 345v1M550 353v5M551 346v2M551 351v2M551 358v2M552 348v1M552 350v1M552 360v1M553 348v1M553 350v1M553 360v1M554 349v1M554 361v1M555 349v1M555 361v1M556 349v1M556 361v1M557 349v1M557 361v1M558 349v1M558 361v1M559 348v1M559 350v1M559 360v1M560 348v1M560 350v1M560 360v1M561 346v2M561 351v2M561 358v2M562 345v1M562 353v5"/>
<path transform="translate(0 .5)" stroke="#fff" d="M571 285h12M549 286h22M538 287h11"/>
<path transform="translate(.5 0)" stroke="#fff" d="M193 496v1M194 494v2M195 492v2M196 490v2M197 488v2M198 487v1M199 485v2M200 483v2M201 481v2M202 480v1M203 478v2M204 476v2M205 474v2M206 472v2M207 471v1"/>
<path transform="translate(.5 0)" stroke="#808080" d="M209 469v1M210 467v1M211 465v1M212 463v1M213 461v1M214 459v1M215 457v1M216 455v1M217 453v1M218 451v1M219 449v1M220 447v1M221 445v1M222 443v1M223 441v1M224 439v1M226 437v1M227 435v1M228 433v1M229 431v1M230 429v1M231 427v1M232 425v1M233 423v1M234 421v1M235 419v1M236 417v1M237 415v1M238 413v1M239 411v1M240 409v1M242 407v1M243 405v1M244 403v1M245 401v1M246 399v1M247 397v1M248 395v1M249 393v1M250 391v1M251 389v1M252 387v1M253 385v1M254 383v1M255 381v1M256 379v1M257 377v1M259 375v1M260 373v1M261 371v1M262 369v1M263 367v1M264 365v1M265 363v1M266 361v1M267 359v1M268 357v1M269 355v1M270 353v1M271 351v1M272 349v1M273 347v1M275 345v1M276 343v1M277 341v1M278 339v1M279 337v1M280 335v1M281 333v1M282 331v1M283 329v1M284 327v1M285 325v1M286 323v1M287 321v1M288 319v1M289 317v1M290 315v1M292 313v1M293 311v1M294 309v1M295 307v1M296 305v1M297 303v1M298 301v1M299 299v1"/>
<path transform="translate(.5 0)" stroke="#0f0" d="M543 210v1M543 226v1M544 211v1M544 225v1M545 212v1M545 224v1M546 212v1M546 224v1M547 212v13M548 212v1M548 224v1M549 212v1M549 224v1M550 212v1M550 224v1M551 212v1M551 224v1M552 212v1M552 224v1M553 212v13M554 212v1M554 224v1M555 212v1M555 224v1M556 211v1M556 225v1M557 210v1M557 226v1"/>
<path transform="translate(0 .5)" stroke="#fff" d="M537 145h1M535 146h2M534 147h1M532 148h2M531 149h1M529 150h2M527 151h2M526 152h1M524 153h2M523 154h1M521 155h2M520 156h1M518 157h2M517 158h1M515 159h2M514 160h1M512 161h2M511 162h1M509 163h2M507 164h2M506 165h1M504 166h2M503 167h1M501 168h2M500 169h1"/>
<path transform="translate(.5 0)" stroke="#fff" d="M316 493v5M317 498v10M318 508v10M319 518v5"/>
<path transform="translate(0 .5)" stroke="#00f" d="M472 97h5M469 98h3M477 98h1M468 99h1M478 99h3M467 100h1M477 100h1M481 100h1M466 101h1M476 101h1M482 101h1M476 102h1M482 102h1M468 103h3M476 103h1M482 103h1M467 104h1M471 104h1M477 104h1M481 104h1M466 105h1M472 105h1M478 105h3M466 106h1M472 106h1M466 107h1M472 107h1M482 107h1M467 108h1M471 108h1M481 108h1M468 109h3M480 109h1M471 110h1M477 110h3M472 111h5"/>
<path transform="translate(.5 0)" stroke="#fff" d="M408 84v2M409 82v2M410 80v2M411 78v2M412 76v2M413 74v2M414 72v2M415 70v2M416 68v2M417 66v2M418 64v2M419 62v2M420 60v2M421 58v2M422 56v2M423 54v2M424 52v2M425 50v2M426 48v2M427 47v1M417 454v1M418 455v2M419 457v1M420 458v1M421 459v2M422 461v1M423 462v1M424 463v2M425 465v1M426 466v1M427 467v2M428 469v1M429 470v1M430 471v2M431 473v1M432 474v1M433 475v2M434 477v1"/>
<path transform="translate(.5 0)" stroke="#808080" d="M299 299v1M301 301v1M302 303v1M304 305v1M305 307v1M307 309v1M308 311v1M310 313v1M311 315v1M313 317v1M314 319v1M316 321v1M317 323v1M319 325v1M320 327v1M322 329v1M323 331v1M325 333v1M326 335v1M328 337v1M329 339v1M331 341v1M332 343v1M334 345v1M335 347v1M337 349v1M339 351v1M340 353v1M342 355v1M343 357v1M345 359v1M346 361v1M348 363v1M349 365v1M351 367v1M352 369v1M354 371v1M355 373v1M357 375v1M358 377v1M360 379v1M361 381v1M363 383v1M364 385v1M366 387v1M367 389v1M369 391v1M370 393v1M372 395v1M373 397v1M375 399v1M376 401v1M378 403v1M380 405v1M381 407v1M383 409v1M384 411v1M386 413v1M387 415v1M389 417v1M390 419v1M392 421v1M393 423v1M395 425v1M396 427v1M398 429v1M399 431v1M401 433v1M402 435v1M404 437v1M405 439v1M407 441v1M408 443v1M410 445v1M411 447v1M413 449v1M414 451v1M416 453v1"/>
<path transform="translate(0 .5)" stroke="#f00" d="M351 34h5M350 35h1M356 35h1M349 36h1M357 36h1M348 37h1M358 37h1M347 38h1M359 38h1M347 39h1M359 39h1M347 40h1M359 40h1M347 41h1M359 41h1M347 42h1M359 42h1M348 43h1M358 43h1M349 44h1M357 44h1M349 45h1M357 45h1M345 46h1M349 46h1M357 46h1M346 47h1M348 47h1M358 47h1M347 48h1M359 48h1M360 49h1M361 50h1"/>
<path transform="translate(.5 0)" stroke="#fff" d="M285 16v11M286 27v22M287 49v12"/>
<path transform="translate(0 .5)" stroke="#fff" d="M476 379h2M478 380h2M480 381h2M482 382h2M484 383h2M486 384h2M488 385h3M491 386h2M493 387h2M495 388h2M497 389h2M499 390h2M501 391h2"/>
<path transform="translate(0 .5)" stroke="#808080" d="M299 299h1M301 300h1M303 301h1M305 302h1M307 303h1M309 304h1M311 304h1M313 305h1M315 306h1M317 307h1M319 308h1M321 309h1M323 310h1M325 311h1M327 312h1M329 313h1M331 314h1M333 314h1M335 315h1M337 316h1M339 317h1M341 318h1M343 319h1M345 320h1M347 321h1M349 322h1M351 323h1M353 324h1M355 324h1M357 325h1M359 326h1M361 327h1M363 328h1M365 329h1M367 330h1M369 331h1M371 332h1M373 333h1M375 334h1M377 334h1M379 335h1M381 336h1M383 337h1M385 338h1M387 339h1M389 340h1M391 341h1M393 342h1M395 343h1M397 344h1M399 344h1M401 345h1M403 346h1M405 347h1M407 348h1M409 349h1M411 350h1M413 351h1M415 352h1M417 353h1M419 354h1M421 354h1M423 355h1M425 356h1M427 357h1M429 358h1M431 359h1M433 360h1M435 361h1M437 362h1M439 363h1M441 364h1M443 364h1M445 365h1M447 366h1M449 367h1M451 368h1M453 369h1M455 370h1M457 371h1M459 372h1M461 373h1M463 374h1M465 374h1M467 375h1M469 376h1M471 377h1M473 378h1M475 379h1"/>
<path transform="translate(.5 0)" stroke="#ff0" d="M210 41v1M211 42v1M212 43v13M213 42v1M214 41v1M215 42v1M216 43v13M217 42v1M218 41v1M219 42v1M220 43v11M220 57v1M221 46v1M221 54v1M221 56v1M222 45v1M222 55v1M223 44v1M223 54v1M223 56v1M224 43v11M224 57v1"/>
<path transform="translate(.5 0)" stroke="#fff" d="M145 61v1M146 62v2M147 64v1M148 65v2M149 67v1M150 68v2M151 70v2M152 72v1M153 73v2M154 75v1M155 76v2M156 78v1M157 79v2M158 81v1M159 82v2M160 84v1M161 85v2M162 87v1M163 88v2M164 90v2M165 92v1M166 93v2M167 95v1M168 96v2M169 98v1"/>
<path transform="translate(0 .5)" stroke="#fff" d="M494 299h30"/>
<path transform="translate(0 .5)" stroke="#0f0" d="M102 120h5M101 121h1M107 121h1M100 122h1M108 122h1M100 123h1M108 123h1M100 124h1M108 124h1M101 125h1M107 125h1M96 126h7M106 126h7M96 130h17"/>
<path transform="translate(0 .5)" stroke="#fff" d="M47 171h1M48 172h2M50 173h2M52 174h2M54 175h2M56 176h2M58 177h2M60 178h2M62 179h2M64 180h2M66 181h2M68 182h2M70 183h2M72 184h2M74 185h2M76 186h2M78 187h2M80 188h2M82 189h2M84 190h2M493 188h1M491 189h2M489 190h2M488 191h1M486 192h2M484 193h2M483 194h1M481 195h2M479 196h2M478 197h1M476 198h2M474 199h2M473 200h1M471 201h2M469 202h2M468 203h1"/>
<path transform="translate(0 .5)" stroke="#808080" d="M467 203h1M465 204h1M463 205h1M461 206h1M459 208h1M457 209h1M455 210h1M453 211h1M451 212h1M449 213h1M447 214h1M445 216h1M443 217h1M441 218h1M439 219h1M437 220h1M435 221h1M433 222h1M431 224h1M429 225h1M427 226h1M425 227h1M423 228h1M421 229h1M419 230h1M417 232h1M415 233h1M413 234h1M411 235h1M409 236h1M407 237h1M405 238h1M403 240h1M401 241h1M399 242h1M397 243h1M395 244h1M393 245h1M391 246h1M389 248h1M387 249h1M385 250h1M383 251h1M381 252h1M379 253h1M377 254h1M375 256h1M373 257h1M371 258h1M369 259h1M367 260h1M365 261h1M363 262h1M361 264h1M359 265h1M357 266h1M355 267h1M353 268h1M351 269h1M349 270h1M347 272h1M345 273h1M343 274h1M341 275h1M339 276h1M337 277h1M335 278h1M333 280h1M331 281h1M329 282h1M327 283h1M325 284h1M323 285h1M321 286h1M319 288h1M317 289h1M315 290h1M313 291h1M311 292h1M309 293h1M307 294h1M305 296h1M303 297h1M301 298h1M299 299h1"/>
<path transform="translate(0 .5)" stroke="#00f" d="M34 237h1M38 237h1M42 237h1M35 238h1M37 238h1M39 238h1M41 238h1M43 238h1M36 239h1M40 239h1M44 239h1M36 240h1M40 240h1M44 240h1M36 241h1M40 241h1M44 241h1M36 242h1M40 242h1M44 242h1M36 243h1M40 243h1M44 243h1M36 244h1M40 244h1M44 244h1M36 245h1M40 245h1M44 245h1M36 246h1M40 246h1M44 246h1M36 247h1M40 247h1M44 247h1M36 248h1M40 248h1M44 248h1M49 248h1M36 249h1M40 249h1M44 249h1M48 249h3M36 250h1M40 250h1M44 250h1M49 250h1M36 251h1M40 251h1M44 251h1M49 251h1M45 252h1M48 252h1M46 253h2"/>
<path transform="translate(0 .5)" stroke="#fff" d="M49 311h12M27 312h22M16 313h11"/>
<path transform="translate(.5 0)" stroke="#fff" d="M391 127v1M392 125v2M393 123v2M394 121v2M395 119v2M396 118v1M397 116v2M398 114v2M399 112v2M400 111v1M401 109v2M402 107v2M403 105v2M404 103v2M405 102v1"/>
<path transform="translate(.5 0)" stroke="#808080" d="M299 299v1M300 297v1M301 295v1M302 293v1M303 291v1M304 289v1M305 287v1M306 285v1M308 283v1M309 281v1M310 279v1M311 277v1M312 275v1M313 273v1M314 271v1M315 269v1M316 267v1M317 265v1M318 263v1M319 261v1M320 259v1M321 257v1M322 255v1M323 253v1M325 251v1M326 249v1M327 247v1M328 245v1M329 243v1M330 241v1M331 239v1M332 237v1M333 235v1M334 233v1M335 231v1M336 229v1M337 227v1M338 225v1M339 223v1M341 221v1M342 219v1M343 217v1M344 215v1M345 213v1M346 211v1M347 209v1M348 207v1M349 205v1M350 203v1M351 201v1M352 199v1M353 197v1M354 195v1M355 193v1M356 191v1M358 189v1M359 187v1M360 185v1M361 183v1M362 181v1M363 179v1M364 177v1M365 175v1M366 173v1M367 171v1M368 169v1M369 167v1M370 165v1M371 163v1M372 161v1M374 159v1M375 157v1M376 155v1M377 153v1M378 151v1M379 149v1M380 147v1M381 145v1M382 143v1M383 141v1M384 139v1M385 137v1M386 135v1M387 133v1M388 131v1M389 129v1"/>
<path transform="translate(0 .5)" stroke="#f00" d="M53 372h5M56 373h2M55 374h1M57 374h1M54 375h1M57 375h1M53 376h1M57 376h1M52 377h1M43 378h1M51 378h1M44 379h1M50 379h1M45 380h1M49 380h1M46 381h1M48 381h1M47 382h1M46 383h1M48 383h1M45 384h1M49 384h1M44 385h1M50 385h1M43 386h1M51 386h1M42 387h1M41 388h1"/>
<path transform="translate(0 .5)" stroke="#fff" d="M98 429h1M96 430h2M95 431h1M93 432h2M92 433h1M90 434h2M88 435h2M87 436h1M85 437h2M84 438h1M82 439h2M81 440h1M79 441h2M78 442h1M76 443h2M75 444h1M73 445h2M72 446h1M70 447h2M68 448h2M67 449h1M65 450h2M64 451h1M62 452h2M61 453h1"/>
<path transform="translate(.5 0)" stroke="#fff" d="M279 76v5M280 81v10M281 91v10M282 101v5"/>
<path transform="translate(0 .5)" stroke="#ff0" d="M118 486h1M124 486h1M128 486h3M117 487h2M124 487h2M127 487h1M131 487h1M116 488h1M118 488h1M124 488h1M126 488h1M132 488h1M118 489h1M123 489h1M125 489h1M132 489h1M118 490h1M122 490h1M126 490h1M132 490h1M118 491h1M122 491h1M127 491h1M131 491h1M118 492h1M122 492h1M128 492h3M118 493h1M122 493h1M129 493h1M118 494h1M122 494h1M130 494h1M119 495h1M121 495h1M131 495h1M120 496h1M132 496h1M120 497h1M132 497h1M120 498h1M132 498h1M120 499h1M132 499h1M120 500h1M132 500h1M131 501h1M130 502h1"/>
<path transform="translate(.5 0)" stroke="#fff" d="M171 550v2M172 548v2M173 546v2M174 544v2M175 542v2M176 540v2M177 538v2M178 536v2M179 534v2M180 532v2M181 530v2M182 528v2M183 526v2M184 524v2M185 522v2M186 520v2M187 518v2M188 516v2M189 514v2M190 513v1M164 121v1M165 122v2M166 124v1M167 125v1M168 126v2M169 128v1M170 129v1M171 130v2M172 132v1M173 133v1M174 134v2M175 136v1M176 137v1M177 138v2M178 140v1M179 141v1M180 142v2M181 144v1"/>
<path transform="translate(.5 0)" stroke="#808080" d="M182 145v1M184 147v1M185 149v1M187 151v1M188 153v1M190 155v1M191 157v1M193 159v1M194 161v1M196 163v1M197 165v1M199 167v1M200 169v1M202 171v1M203 173v1M205 175v1M206 177v1M208 179v1M209 181v1M211 183v1M212 185v1M214 187v1M215 189v1M217 191v1M218 193v1M220 195v1M222 197v1M223 199v1M225 201v1M226 203v1M228 205v1M229 207v1M231 209v1M232 211v1M234 213v1M235 215v1M237 217v1M238 219v1M240 221v1M241 223v1M243 225v1M244 227v1M246 229v1M247 231v1M249 233v1M250 235v1M252 237v1M253 239v1M255 241v1M256 243v1M258 245v1M259 247v1M261 249v1M263 251v1M264 253v1M266 255v1M267 257v1M269 259v1M270 261v1M272 263v1M273 265v1M275 267v1M276 269v1M278 271v1M279 273v1M281 275v1M282 277v1M284 279v1M285 281v1M287 283v1M288 285v1M290 287v1M291 289v1M293 291v1M294 293v1M296 295v1M297 297v1M299 299v1"/>
<path transform="translate(0 .5)" stroke="#0f0" d="M241 548h1M247 548h1M253 548h1M240 549h2M246 549h2M252 549h1M240 550h1M242 550h1M246 550h1M248 550h1M252 550h1M239 551h1M242 551h1M245 551h1M248 551h1M251 551h1M238 552h1M242 552h1M244 552h1M248 552h1M250 552h1M238 553h1M243 553h2M249 553h2M237 554h1M243 554h1M249 554h1M241 558h1M247 558h1M253 558h1M240 559h2M246 559h2M252 559h1M240 560h1M242 560h1M246 560h1M248 560h1M252 560h1M239 561h1M242 561h1M245 561h1M248 561h1M251 561h1M238 562h1M242 562h1M244 562h1M248 562h1M250 562h1M238 563h1M243 563h2M249 563h2M237 564h1M243 564h1M249 564h1"/>
<path transform="translate(.5 0)" stroke="#fff" d="M311 538v11M312 549v22M313 571v12"/>
<path transform="translate(0 .5)" stroke="#fff" d="M96 207h2M98 208h2M100 209h2M102 210h2M104 211h2M106 212h2M108 213h3M111 214h2M113 215h2M115 216h2M117 217h2M119 218h2M121 219h2"/>
<path transform="translate(0 .5)" stroke="#808080" d="M123 219h1M125 220h1M127 221h1M129 222h1M131 223h1M133 224h1M135 224h1M137 225h1M139 226h1M141 227h1M143 228h1M145 229h1M147 230h1M149 231h1M151 232h1M153 233h1M155 234h1M157 234h1M159 235h1M161 236h1M163 237h1M165 238h1M167 239h1M169 240h1M171 241h1M173 242h1M175 243h1M177 244h1M179 244h1M181 245h1M183 246h1M185 247h1M187 248h1M189 249h1M191 250h1M193 251h1M195 252h1M197 253h1M199 254h1M201 254h1M203 255h1M205 256h1M207 257h1M209 258h1M211 259h1M213 260h1M215 261h1M217 262h1M219 263h1M221 264h1M223 264h1M225 265h1M227 266h1M229 267h1M231 268h1M233 269h1M235 270h1M237 271h1M239 272h1M241 273h1M243 274h1M245 274h1M247 275h1M249 276h1M251 277h1M253 278h1M255 279h1M257 280h1M259 281h1M261 282h1M263 283h1M265 284h1M267 284h1M269 285h1M271 286h1M273 287h1M275 288h1M277 289h1M279 290h1M281 291h1M283 292h1M285 293h1M287 294h1M289 294h1M291 295h1M293 296h1M295 297h1M297 298h1M299 299h1"/>
<path transform="translate(0 .5)" stroke="#00f" d="M372 541h1M388 541h1M373 542h1M387 542h1M374 543h1M386 543h1M375 544h1M385 544h1M375 545h1M385 545h1M376 546h1M384 546h1M376 547h1M384 547h1M376 548h1M384 548h1M372 549h17M376 550h1M384 550h1M376 551h1M384 551h1M376 552h1M384 552h1M375 553h1M385 553h1M375 554h1M385 554h1M374 555h1M386 555h1M373 556h1M387 556h1M372 557h1M388 557h1"/>
<path transform="translate(.5 0)" stroke="#fff" d="M284 132v6M285 138v7"/>
<text class="ang" x="275" y="129" textLength="17" lengthAdjust="spacingAndGlyphs" fill="#ff0">MC</text>
<path transform="translate(0 .5)" stroke="#ff0" d="M286 150h1"/>
<path transform="translate(0 .5)" stroke="#fff" d="M131 299h13"/>
<text class="ang" x="111" y="308" textLength="17" lengthAdjust="spacingAndGlyphs" fill="#f00">Asc</text>
<path transform="translate(0 .5)" stroke="#f00" d="M149 299h1"/>
<path transform="translate(0 .5)" stroke="#808080" d="M424 392h1M425 393h1M426 394h2M428 395h1M429 396h1M430 397h2M432 398h1M433 399h1"/>
<path transform="translate(0 .5)" stroke="#008080" d="M441 398h5M440 399h1M446 399h1M439 400h1M447 400h1M438 401h1M448 401h1M437 402h1M449 402h1M437 403h1M449 403h1M437 404h1M449 404h1M437 405h1M449 405h1M437 406h1M449 406h1M438 407h1M448 407h1M439 408h1M447 408h1M439 409h1M447 409h1M437 410h3M447 410h3M436 411h1M439 411h1M447 411h1M450 411h1M435 412h1M439 412h1M447 412h1M451 412h1M436 413h1M438 413h1M448 413h1M450 413h1M437 414h1M449 414h1M419 388h1"/>
<path transform="translate(0 .5)" stroke="#808080" d="M160 368h1M158 369h2M156 370h2M154 371h2M152 372h2M150 373h2M149 374h1"/>
<path transform="translate(.5 0)" stroke="#00f" d="M132 371v5M133 376v2M134 378v1M134 383v1M135 378v1M135 383v1M136 372v3M136 379v1M136 383v1M137 371v1M137 375v1M137 379v1M137 383v1M138 371v1M138 375v1M138 379v9M139 371v1M139 375v1M139 379v1M139 383v1M140 372v3M140 379v1M140 383v1M141 378v1M141 383v1M142 378v1M142 383v1M143 376v2M144 371v5"/>
<path transform="translate(0 .5)" stroke="#00f" d="M165 366h1"/>
<path transform="translate(.5 0)" stroke="#808080" d="M272 462v3M273 456v6M274 453v3"/>
<path transform="translate(.5 0)" stroke="#00f" d="M263 470v1M264 468v5M265 470v1M265 473v2M266 475v1M266 480v1M267 475v1M267 480v1M268 470v1M268 476v1M268 480v1M269 470v1M269 476v1M269 480v1M270 468v17M271 470v1M271 476v1M271 480v1M272 470v1M272 476v1M272 480v1M273 475v1M273 480v1M274 475v1M274 480v1M275 470v1M275 473v2M276 468v5M277 470v1"/>
<path transform="translate(0 .5)" stroke="#00f" d="M275 447h1"/>
<path transform="translate(.5 0)" stroke="#fff" d="M335 450v2M336 452v4M337 456v4M338 460v3"/>
<path transform="translate(.5 0)" stroke="#0f0" d="M335 466v1M335 476v1M336 467v1M336 475v1M337 468v7M338 472v1M339 472v1M339 479v3M340 472v1M340 478v1M340 482v1M341 470v9M341 482v1M342 472v1M342 478v1M342 482v1M343 472v1M343 479v3M344 472v1M345 468v7M346 467v1M346 475v1M347 466v1M347 476v1"/>
<path transform="translate(0 .5)" stroke="#0f0" d="M334 444h1"/>
<path transform="translate(.5 0)" stroke="#fff" d="M383 168v1M384 166v2M385 164v2M386 163v1M387 161v2M388 159v2M389 158v1"/>
<path transform="translate(.5 0)" stroke="#ff0" d="M390 142v1M391 142v1M392 142v1M393 142v1M394 140v15M395 142v1M395 148v1M396 142v1M396 148v1M397 142v1M397 147v1M398 142v1M398 146v1M399 146v1M400 146v1M400 152v3M401 147v1M401 151v1M401 155v1M402 148v3M402 156v1"/>
<path transform="translate(0 .5)" stroke="#ff0" d="M379 173h1"/>
<path transform="translate(.5 0)" stroke="#808080" d="M187 174v1M188 175v1M189 176v1M190 177v1M191 178v2M192 180v1M193 181v1M194 182v1M195 183v1"/>
<path transform="translate(.5 0)" stroke="#f00" d="M173 170v2M174 159v1M174 168v2M174 171v1M175 159v1M175 166v2M175 171v1M176 160v1M176 164v2M176 171v1M177 161v3M177 171v1M178 171v1M179 171v1M180 171v1M181 171v1M182 171v1M183 159v15M184 158v1M184 171v1M185 157v1M185 171v1M186 171v1M187 171v1"/>
<path transform="translate(0 .5)" stroke="#f00" d="M199 188h1"/>
<path transform="translate(0 .5)" stroke="#fff" d="M364 440h1M365 441h1M366 442h1M367 443h1M368 444h1M369 445h2M371 446h1M372 447h1M373 448h1M374 449h1"/>
<path transform="translate(0 .5)" stroke="#f00" d="M382 452h6M386 453h2M385 454h1M387 454h1M384 455h1M387 455h1M383 456h1M387 456h1M382 457h1M387 457h1M374 458h5M381 458h1M373 459h1M379 459h2M372 460h1M380 460h1M371 461h1M381 461h1M371 462h1M381 462h1M371 463h1M381 463h1M371 464h1M381 464h1M371 465h1M381 465h1M372 466h1M380 466h1M373 467h1M379 467h1M374 468h5M361 435h1"/>
<path transform="translate(0 .5)" stroke="#fff" d="M446 218h1M444 219h2M442 220h2M440 221h2M438 222h2M436 223h2M435 224h1"/>
<path transform="translate(.5 0)" stroke="#0f0" d="M452 206v5M452 216v1M453 205v1M453 211v1M453 216v1M454 204v1M454 212v1M454 216v1M455 204v1M455 212v1M455 216v1M456 204v1M456 212v9M457 204v1M457 212v1M457 216v1M458 204v1M458 212v1M458 216v1M459 205v1M459 211v1M459 216v1M460 206v5M460 216v1"/>
<path transform="translate(0 .5)" stroke="#0f0" d="M430 227h1"/>
<path transform="translate(0 .5)" stroke="#fff" d="M453 274h6M459 275h7"/>
<path transform="translate(.5 0)" stroke="#0f0" d="M473 265v1M473 269v5M473 279v1M474 266v1M474 268v1M474 274v1M474 279v1M475 267v1M475 275v1M475 279v1M476 267v1M476 275v1M476 279v1M477 267v1M477 275v7M478 267v1M478 275v1M478 279v1M479 267v1M479 275v1M479 279v1M480 266v1M480 268v1M480 274v1M480 279v1M481 265v1M481 269v5M481 279v1"/>
<path transform="translate(0 .5)" stroke="#0f0" d="M447 275h1"/>
<path transform="translate(.5 0)" stroke="#fff" d="M358 455v2M359 452v3M360 450v2M361 447v3M362 444v3M363 442v2M364 440v2"/>
<path transform="translate(.5 0)" stroke="#00f" d="M356 461v1M356 473v1M357 460v1M357 462v1M357 472v1M357 474v1M358 459v1M358 463v1M358 471v1M358 475v1M359 459v1M359 464v2M359 469v2M359 475v1M360 459v1M360 466v3M360 475v1M361 459v1M361 475v1M362 459v1M362 475v1M363 460v1M363 474v1M364 460v1M364 474v1M365 461v1M365 473v1M366 462v1M366 472v1M367 463v2M367 470v2M368 465v5"/>
<path transform="translate(0 .5)" stroke="#00f" d="M361 435h1"/>
<path transform="translate(0 .5)" stroke="#fff" d="M461 257h1M459 258h2M458 259h1M456 260h2M455 261h1M454 262h1M452 263h2M451 264h1"/>
<path transform="translate(0 .5)" stroke="#f00" d="M471 246h5M469 247h2M476 247h2M468 248h1M478 248h1M467 249h1M479 249h1M466 250h1M480 250h1M466 251h1M480 251h1M465 252h1M481 252h1M465 253h1M481 253h1M465 254h1M473 254h1M481 254h1M465 255h1M481 255h1M465 256h1M481 256h1M466 257h1M480 257h1M466 258h1M480 258h1M467 259h1M479 259h1M468 260h1M478 260h1M469 261h2M476 261h2M471 262h5M445 266h1"/>
<path transform="translate(.5 0)" stroke="#f00" d="M155 299v1M158 296v1M160 293v1M163 290v1M166 287v1M169 284v1M171 281v1M174 278v1M177 275v1M180 272v1M182 269v1M185 266v1M188 263v1M191 260v1M193 257v1M196 254v1M199 251v1M202 248v1M204 245v1M207 242v1M210 239v1M213 236v1M215 233v1M218 230v1M221 227v1M224 224v1M226 221v1M229 218v1M232 215v1M235 212v1M237 209v1M240 206v1M243 203v1M246 200v1M248 197v1M251 194v1M254 191v1M257 188v1M259 185v1M262 182v1M265 179v1M268 176v1M270 173v1M273 170v1M276 167v1M279 164v1M281 161v1M284 158v1"/>
<path transform="translate(0 .5)" stroke="#f00" d="M288 158h1M291 160h1M294 162h1M297 165h1M300 167h1M303 169h1M306 171h1M309 174h1M312 176h1M315 178h1M318 181h1M321 183h1M324 185h1M327 188h1M330 190h1M333 192h1M336 195h1M339 197h1M342 199h1M345 202h1M348 204h1M351 206h1M354 209h1M357 211h1M360 213h1M363 216h1M366 218h1M369 220h1M372 223h1M375 225h1M378 227h1M381 230h1M384 232h1M387 234h1M390 237h1M393 239h1M396 241h1M399 243h1M402 246h1M405 248h1M408 250h1M411 253h1M414 255h1M417 257h1M420 260h1M423 262h1M426 264h1M429 267h1M432 269h1M435 271h1M438 274h1M441 276h1M287 157h1M291 160h1M295 163h1M299 165h1M303 168h1M307 171h1M311 174h1M315 177h1M319 180h1M323 183h1M327 186h1M331 189h1M335 192h1M339 194h1M343 197h1M347 200h1M351 203h1M355 206h1M359 209h1M363 212h1M367 215h1M371 218h1M375 221h1M379 223h1M383 226h1M387 229h1M391 232h1M395 235h1M399 238h1M403 241h1M407 244h1M411 247h1M415 250h1M419 252h1M423 255h1M427 258h1M431 261h1M435 264h1M439 267h1"/>
<path transform="translate(0 .5)" stroke="#0f0" d="M376 178h1M374 179h1M372 180h1M370 181h1M368 182h1M366 183h1M364 185h1M362 186h1M360 187h1M358 188h1M356 189h1M354 190h1M352 191h1M350 192h1M348 193h1M346 194h1M344 196h1M342 197h1M340 198h1M338 199h1M336 200h1M334 201h1M332 202h1M330 203h1M328 204h1M326 205h1M324 206h1M322 208h1M320 209h1M318 210h1M316 211h1M314 212h1M312 213h1M310 214h1M308 215h1M306 216h1M304 217h1M302 219h1M300 220h1M298 221h1M296 222h1M294 223h1M292 224h1M290 225h1M288 226h1M286 227h1M284 228h1M282 229h1M280 231h1M278 232h1M276 233h1M274 234h1M272 235h1M270 236h1M268 237h1M266 238h1M264 239h1M262 240h1M260 242h1M258 243h1M256 244h1M254 245h1M252 246h1M250 247h1M248 248h1M246 249h1M244 250h1M242 251h1M240 252h1M238 254h1M236 255h1M234 256h1M232 257h1M230 258h1M228 259h1M226 260h1M224 261h1M222 262h1M220 263h1M218 265h1M216 266h1M214 267h1M212 268h1M210 269h1M208 270h1M206 271h1M204 272h1M202 273h1M200 274h1M198 275h1M196 277h1M194 278h1M192 279h1M190 280h1M188 281h1M186 282h1M184 283h1M182 284h1M180 285h1M178 286h1M176 288h1M174 289h1M172 290h1M170 291h1M168 292h1M166 293h1M164 294h1M162 295h1M160 296h1M158 297h1M156 298h1M155 299h1M158 301h1M161 303h1M164 305h1M167 307h1M170 309h1M173 310h1M176 312h1M179 314h1M182 316h1M185 318h1M188 320h1M191 322h1M194 324h1M197 326h1M200 328h1M203 330h1M206 332h1M209 333h1M212 335h1M215 337h1M218 339h1M221 341h1M224 343h1M227 345h1M230 347h1M233 349h1M236 351h1M239 353h1M242 354h1M245 356h1M248 358h1M251 360h1M254 362h1M257 364h1M260 366h1M263 368h1M266 370h1M269 372h1M272 374h1M275 375h1M278 377h1M281 379h1M284 381h1M287 383h1M290 385h1M293 387h1M296 389h1M299 391h1M302 393h1M305 395h1M308 397h1M311 398h1M314 400h1M317 402h1M320 404h1M323 406h1M326 408h1M329 410h1M332 412h1M335 414h1M338 416h1M341 418h1M344 419h1M347 421h1M350 423h1M353 425h1M356 427h1M359 429h1M155 299h1M158 301h1M161 303h1M164 305h1M167 307h1M170 309h1M173 311h1M176 312h1M179 314h1M182 316h1M185 318h1M188 320h1M191 322h1M194 324h1M197 326h1M200 328h1M203 330h1M206 332h1M209 334h1M212 336h1M215 338h1M218 339h1M221 341h1M224 343h1M227 345h1M230 347h1M233 349h1M236 351h1M239 353h1M242 355h1M245 357h1M248 359h1M251 361h1M254 363h1M257 365h1M260 366h1M263 368h1M266 370h1M269 372h1M272 374h1M275 376h1M278 378h1M281 380h1M284 382h1M287 384h1M290 386h1M293 388h1M296 390h1M299 391h1M302 393h1M305 395h1M308 397h1M311 399h1M314 401h1M317 403h1M320 405h1M323 407h1M326 409h1M329 411h1M332 413h1M335 415h1M338 417h1M341 418h1M344 420h1M347 422h1M350 424h1M353 426h1M356 428h1M359 430h1"/>
<path transform="translate(0 .5)" stroke="#0ff" d="M171 364h1M174 366h1M177 368h1M180 370h1M183 373h1M186 375h1M189 377h1M192 379h1M195 381h1M198 384h1M201 386h1M204 388h1M207 390h1M210 392h1M213 395h1M216 397h1M219 399h1M222 401h1M225 403h1M228 406h1M231 408h1M234 410h1M237 412h1M240 415h1M243 417h1M246 419h1M249 421h1M252 423h1M255 426h1M258 428h1M261 430h1M264 432h1M267 434h1M270 437h1M273 439h1M276 441h1"/>
<path transform="translate(0 .5)" stroke="#f00" d="M170 363h2M172 364h3M175 365h3M178 366h3M181 367h2M183 368h3M186 369h3M189 370h3M192 371h3M195 372h3M198 373h3M201 374h2M203 375h3M206 376h3M209 377h3M212 378h3M215 379h3M218 380h3M221 381h2M223 382h3M226 383h3M229 384h3M232 385h3M235 386h3M238 387h3M241 388h3M244 389h2M246 390h3M249 391h3M252 392h3M255 393h3M258 394h3M261 395h3M264 396h2M266 397h3M269 398h3M272 399h3M275 400h3M278 401h3M281 402h3M284 403h2M286 404h3M289 405h3M292 406h3M295 407h3M298 408h3M301 409h3M304 410h3M307 411h2M309 412h3M312 413h3M315 414h3M318 415h3M321 416h3M324 417h3M327 418h2M329 419h3M332 420h3M335 421h3M338 422h3M341 423h3M344 424h3M347 425h2M349 426h3M352 427h3M355 428h3M358 429h2"/>
<path transform="translate(0 .5)" stroke="#00f" d="M425 230h1M423 231h1M421 232h1M419 233h1M417 234h1M415 235h1M413 236h1M411 237h1M409 238h1M407 239h1M405 240h1M403 241h1M401 243h1M399 244h1M397 245h1M395 246h1M393 247h1M391 248h1M389 249h1M387 250h1M385 251h1M383 252h1M381 253h1M379 254h1M377 255h1M375 256h1M373 257h1M371 258h1M369 259h1M367 260h1M365 261h1M363 262h1M361 263h1M359 264h1M357 265h1M355 267h1M353 268h1M351 269h1M349 270h1M347 271h1M345 272h1M343 273h1M341 274h1M339 275h1M337 276h1M335 277h1M333 278h1M331 279h1M329 280h1M327 281h1M325 282h1M323 283h1M321 284h1M319 285h1M317 286h1M315 287h1M313 288h1M311 289h1M309 291h1M307 292h1M305 293h1M303 294h1M301 295h1M299 296h1M297 297h1M295 298h1M293 299h1M291 300h1M289 301h1M287 302h1M285 303h1M283 304h1M281 305h1M279 306h1M277 307h1M275 308h1M273 309h1M271 310h1M269 311h1M267 312h1M265 313h1M263 314h1M261 316h1M259 317h1M257 318h1M255 319h1M253 320h1M251 321h1M249 322h1M247 323h1M245 324h1M243 325h1M241 326h1M239 327h1M237 328h1M235 329h1M233 330h1M231 331h1M229 332h1M227 333h1M225 334h1M223 335h1M221 336h1M219 337h1M217 338h1M215 340h1M213 341h1M211 342h1M209 343h1M207 344h1M205 345h1M203 346h1M201 347h1M199 348h1M197 349h1M195 350h1M193 351h1M191 352h1M189 353h1M187 354h1M185 355h1M183 356h1M181 357h1M179 358h1M177 359h1M175 360h1M173 361h1M171 362h1"/>
<path transform="translate(0 .5)" stroke="#f00" d="M170 363h2M172 364h3M175 365h3M178 366h2M180 367h3M183 368h3M186 369h3M189 370h3M192 371h2M194 372h3M197 373h3M200 374h3M203 375h3M206 376h3M209 377h2M211 378h3M214 379h3M217 380h3M220 381h3M223 382h3M226 383h2M228 384h3M231 385h3M234 386h3M237 387h3M240 388h2M242 389h3M245 390h3M248 391h3M251 392h3M254 393h3M257 394h2M259 395h3M262 396h3M265 397h3M268 398h3M271 399h2M273 400h3M276 401h3M279 402h3M282 403h3M285 404h3M288 405h2M290 406h3M293 407h3M296 408h3M299 409h3M302 410h2M304 411h3M307 412h3M310 413h3M313 414h3M316 415h3M319 416h2M321 417h3M324 418h3M327 419h3M330 420h3M333 421h3M336 422h2M338 423h3M341 424h3M344 425h3M347 426h3M350 427h2M352 428h3M355 429h3M358 430h2"/>
<path transform="translate(.5 0)" stroke="#0f0" d="M278 439v1M282 435v1M285 431v1M289 427v1M293 423v1M297 419v1M300 415v1M304 411v1M308 407v1M312 403v1M315 399v1M319 395v1M323 391v1M327 387v1M330 383v1M334 379v1M338 375v1M342 371v1M345 367v1M349 363v1M353 359v1M357 355v1M360 351v1M364 347v1M368 343v1M372 339v1M375 335v1M379 331v1M383 327v1M387 323v1M390 319v1M394 315v1M398 311v1M402 307v1M405 303v1M409 299v1M413 295v1M417 291v1M420 287v1M424 283v1M428 279v1M432 275v1M435 271v1M439 267v1"/>
<path transform="translate(.5 0)" stroke="#f00" d="M334 438v1M336 435v1M338 432v1M340 429v1M342 426v1M344 423v1M346 420v1M348 417v1M350 414v1M352 411v1M354 408v1M356 405v1M358 402v1M360 399v1M361 396v1M363 393v1M365 390v1M367 387v1M369 384v1M371 381v1M373 378v1M375 375v1M377 372v1M379 369v1M381 366v1M383 363v1M385 360v1M387 357v1M389 354v1M391 351v1M393 348v1M395 345v1M397 342v1M399 339v1M401 336v1M403 333v1M405 330v1M407 327v1M409 324v1M411 321v1M413 318v1M415 315v1M417 312v1M419 309v1M421 306v1M423 303v1M425 300v1M427 297v1M429 294v1M431 291v1M433 288v1M435 285v1M437 282v1M439 279v1M441 276v1M333 439v1M334 437v2M335 435v2M336 434v1M337 432v2M338 431v1M339 429v2M340 427v2M341 426v1M342 424v2M343 422v2M344 421v1M345 419v2M346 418v1M347 416v2M348 414v2M349 413v1M350 411v2M351 409v2M352 408v1M353 406v2M354 405v1M355 403v2M356 401v2M357 400v1M358 398v2M359 396v2M360 395v1M361 393v2M362 392v1M363 390v2M364 388v2M365 387v1M366 385v2M367 384v1M368 382v2M369 380v2M370 379v1M371 377v2M372 375v2M373 374v1M374 372v2M375 371v1M376 369v2M377 367v2M378 366v1M379 364v2M380 362v2M381 361v1M382 359v2M383 358v1M384 356v2M385 354v2M386 353v1M387 351v2M388 349v2M389 348v1M390 346v2M391 345v1M392 343v2M393 341v2M394 340v1M395 338v2M396 336v2M397 335v1M398 333v2M399 332v1M400 330v2M401 328v2M402 327v1M403 325v2M404 323v2M405 322v1M406 320v2M407 319v1M408 317v2M409 315v2M410 314v1M411 312v2M412 310v2M413 309v1M414 307v2M415 306v1M416 304v2M417 302v2M418 301v1M419 299v2M420 298v1M421 296v2M422 294v2M423 293v1M424 291v2M425 289v2M426 288v1M427 286v2M428 285v1M429 283v2M430 281v2M431 280v1M432 278v2M433 276v2M434 275v1M435 273v2M436 272v1M437 270v2M438 268v2M439 267v1"/>
<path transform="translate(.5 0)" stroke="#0f0" d="M359 423v1M359 425v1M359 427v1M359 429v1M360 407v1M360 409v1M360 411v1M360 413v1M360 415v1M360 417v1M360 419v1M360 421v1M361 393v1M361 395v1M361 397v1M361 399v1M361 401v1M361 403v1M361 405v1M362 379v1M362 381v1M362 383v1M362 385v1M362 387v1M362 389v1M362 391v1M363 363v1M363 365v1M363 367v1M363 369v1M363 371v1M363 373v1M363 375v1M363 377v1M364 349v1M364 351v1M364 353v1M364 355v1M364 357v1M364 359v1M364 361v1M365 335v1M365 337v1M365 339v1M365 341v1M365 343v1M365 345v1M365 347v1M366 319v1M366 321v1M366 323v1M366 325v1M366 327v1M366 329v1M366 331v1M366 333v1M367 305v1M367 307v1M367 309v1M367 311v1M367 313v1M367 315v1M367 317v1M368 289v1M368 291v1M368 293v1M368 295v1M368 297v1M368 299v1M368 301v1M368 303v1M369 275v1M369 277v1M369 279v1M369 281v1M369 283v1M369 285v1M369 287v1M370 261v1M370 263v1M370 265v1M370 267v1M370 269v1M370 271v1M370 273v1M371 245v1M371 247v1M371 249v1M371 251v1M371 253v1M371 255v1M371 257v1M371 259v1M372 231v1M372 233v1M372 235v1M372 237v1M372 239v1M372 241v1M372 243v1M373 215v1M373 217v1M373 219v1M373 221v1M373 223v1M373 225v1M373 227v1M373 229v1M374 201v1M374 203v1M374 205v1M374 207v1M374 209v1M374 211v1M374 213v1M375 187v1M375 189v1M375 191v1M375 193v1M375 195v1M375 197v1M375 199v1M376 179v1M376 181v1M376 183v1M376 185v1M359 424v1M359 426v1M359 428v1M359 430v1M360 408v1M360 410v1M360 412v1M360 414v1M360 416v1M360 418v1M360 420v1M360 422v1M361 394v1M361 396v1M361 398v1M361 400v1M361 402v1M361 404v1M361 406v1M362 380v1M362 382v1M362 384v1M362 386v1M362 388v1M362 390v1M362 392v1M363 364v1M363 366v1M363 368v1M363 370v1M363 372v1M363 374v1M363 376v1M363 378v1M364 350v1M364 352v1M364 354v1M364 356v1M364 358v1M364 360v1M364 362v1M365 334v1M365 336v1M365 338v1M365 340v1M365 342v1M365 344v1M365 346v1M365 348v1M366 320v1M366 322v1M366 324v1M366 326v1M366 328v1M366 330v1M366 332v1M367 304v1M367 306v1M367 308v1M367 310v1M367 312v1M367 314v1M367 316v1M367 318v1M368 290v1M368 292v1M368 294v1M368 296v1M368 298v1M368 300v1M368 302v1M369 276v1M369 278v1M369 280v1M369 282v1M369 284v1M369 286v1M369 288v1M370 260v1M370 262v1M370 264v1M370 266v1M370 268v1M370 270v1M370 272v1M370 274v1M371 246v1M371 248v1M371 250v1M371 252v1M371 254v1M371 256v1M371 258v1M372 230v1M372 232v1M372 234v1M372 236v1M372 238v1M372 240v1M372 242v1M372 244v1M373 216v1M373 218v1M373 220v1M373 222v1M373 224v1M373 226v1M373 228v1M374 202v1M374 204v1M374 206v1M374 208v1M374 210v1M374 212v1M374 214v1M375 186v1M375 188v1M375 190v1M375 192v1M375 194v1M375 196v1M375 198v1M375 200v1M376 178v1M376 180v1M376 182v1M376 184v1"/>
<path transform="translate(0 .5)" stroke="#0f0" d="M203 192h1M205 193h1M207 193h1M209 194h1M211 195h1M213 196h1M215 196h1M217 197h1M219 198h1M221 198h1M223 199h1M225 200h1M227 200h1M229 201h1M231 202h1M233 203h1M235 203h1M237 204h1M239 205h1M241 205h1M243 206h1M245 207h1M247 208h1M249 208h1M251 209h1M253 210h1M255 210h1M257 211h1M259 212h1M261 212h1M263 213h1M265 214h1M267 215h1M269 215h1M271 216h1M273 217h1M275 217h1M277 218h1M279 219h1M281 220h1M283 220h1M285 221h1M287 222h1M289 222h1M291 223h1M293 224h1M295 224h1M297 225h1M299 226h1M301 227h1M303 227h1M305 228h1M307 229h1M309 229h1M311 230h1M313 231h1M315 232h1M317 232h1M319 233h1M321 234h1M323 234h1M325 235h1M327 236h1M329 236h1M331 237h1M333 238h1M335 239h1M337 239h1M339 240h1M341 241h1M343 241h1M345 242h1M347 243h1M349 244h1M351 244h1M353 245h1M355 246h1M357 246h1M359 247h1M361 248h1M363 248h1M365 249h1M367 250h1M369 251h1M371 251h1M373 252h1M375 253h1M377 253h1M379 254h1M381 255h1M383 256h1M385 256h1M387 257h1M389 258h1M391 258h1M393 259h1M395 260h1M397 260h1M399 261h1M401 262h1M403 263h1M405 263h1M407 264h1M409 265h1M411 265h1M413 266h1M415 267h1M417 268h1M419 268h1M421 269h1M423 270h1M425 270h1M427 271h1M429 272h1M431 272h1M433 273h1M435 274h1M437 275h1M439 275h1M441 276h1M203 192h2M205 193h3M208 194h3M211 195h4M215 196h3M218 197h3M221 198h3M224 199h3M227 200h3M230 201h3M233 202h4M237 203h3M240 204h3M243 205h3M246 206h3M249 207h3M252 208h3M255 209h4M259 210h3M262 211h3M265 212h3M268 213h3M271 214h3M274 215h3M277 216h4M281 217h3M284 218h3M287 219h3M290 220h3M293 221h3M296 222h3M299 223h4M303 224h3M306 225h3M309 226h3M312 227h3M315 228h3M318 229h3M321 230h4M325 231h3M328 232h3M331 233h3M334 234h3M337 235h3M340 236h4M344 237h3M347 238h3M350 239h3M353 240h3M356 241h3M359 242h3M362 243h4M366 244h3M369 245h3M372 246h3M375 247h3M378 248h3M381 249h3M384 250h4M388 251h3M391 252h3M394 253h3M397 254h3M400 255h3M403 256h3M406 257h4M410 258h3M413 259h3M416 260h3M419 261h3M422 262h3M425 263h3M428 264h4M432 265h3M435 266h3M438 267h2"/>
<path transform="translate(.5 0)" stroke="#f00" d="M359 428v1M360 425v1M361 422v1M362 419v1M363 416v1M364 413v1M365 410v1M366 407v1M367 404v1M368 401v1M369 398v1M370 395v1M371 392v1M372 389v1M373 386v1M374 383v1M375 380v1M376 377v1M377 374v1M378 371v1M379 368v1M380 365v1M381 362v1M382 359v1M383 356v1M384 353v1M385 350v1M386 347v1M387 344v1M388 341v1M389 338v1M390 335v1M391 332v1M392 329v1M393 326v1M394 323v1M395 320v1M396 317v1M397 314v1M398 311v1M399 308v1M400 305v1M401 302v1M402 299v1M403 296v1M404 293v1M405 290v1M406 287v1M407 284v1M408 281v1M409 278v1M410 275v1M411 272v1M412 269v1M413 266v1M414 263v1M415 260v1M416 257v1M417 254v1M418 251v1M419 248v1M420 245v1M421 242v1M422 239v1M423 236v1M424 233v1M425 230v1"/>
<path transform="translate(.5 0)" stroke="#ff0" d="M359 429v2"/>
<path transform="translate(.5 0)" stroke="#f00" d="M359 430v1M360 427v1M361 424v1M362 421v1M363 418v1M364 415v1M365 412v1M366 409v1M367 406v1M368 403v1M369 400v1M370 397v1M371 394v1M372 391v1M373 388v1M374 385v1M375 382v1M376 379v1M377 376v1M378 373v1M379 370v1M380 367v1M381 364v1M382 361v1M383 358v1M384 355v1M385 352v1M386 349v1M387 346v1M388 343v1M389 340v1M390 337v1M391 334v1M392 331v1M393 328v1M394 325v1M395 322v1M396 319v1M397 316v1M398 313v1M399 310v1M400 307v1M401 304v1M402 301v1M403 298v1M404 295v1M405 292v1M406 289v1M407 286v1M408 280v1M408 283v1M409 277v1M410 274v1M411 271v1M412 268v1M413 265v1M414 262v1M415 259v1M416 256v1M417 253v1M418 250v1M419 247v1M420 244v1M421 241v1M422 238v1M423 235v1M424 232v1"/>
<path transform="translate(.5 0)" stroke="#ff0" d="M439 267v1M439 269v1M440 271v1M440 273v1M441 275v1"/>
<path transform="translate(0 .5)" stroke="#f00" d="M744 106h1M746 106h1M748 106h1M745 107h1M747 107h1M749 107h1M745 108h1M747 108h1M749 108h1M745 109h1M747 109h1M749 109h1M745 110h1M747 110h1M749 110h1M745 111h1M747 111h1M749 111h1M745 112h1M747 112h1M749 112h1M752 112h1M745 113h1M747 113h1M749 113h1M752 113h1M750 114h2"/>
<path transform="translate(0 .5)" stroke="#ff0" d="M750 116h3M751 117h2M750 118h1M752 118h1M745 119h1M749 119h1M746 120h1M748 120h1M747 121h1M746 122h1M748 122h1M745 123h1M749 123h1M744 124h1"/>
<path transform="translate(0 .5)" stroke="#0f0" d="M745 126h1M748 126h1M750 126h2M744 127h2M748 127h2M752 127h1M745 128h1M747 128h1M749 128h1M752 128h1M745 129h1M747 129h1M750 129h2M745 130h1M747 130h1M751 130h1M746 131h1M752 131h1M746 132h1M752 132h1M746 133h1M752 133h1M751 134h1"/>
<path transform="translate(0 .5)" stroke="#00f" d="M744 136h1M752 136h1M745 137h1M751 137h1M746 138h1M750 138h1M746 139h1M750 139h1M744 140h9M746 141h1M750 141h1M746 142h1M750 142h1M745 143h1M751 143h1M744 144h1M752 144h1"/>
<path transform="translate(0 .5)" stroke="#f00" d="M745 146h2M750 146h2M744 147h1M747 147h1M749 147h1M752 147h1M744 148h1M747 148h1M749 148h1M752 148h1M745 149h1M747 149h1M749 149h1M751 149h1M748 150h1M748 151h1M748 152h1M748 153h1M748 154h1"/>
<path transform="translate(.5 0)" stroke="#ff0" d="M745 156v1M745 160v3M746 157v1M746 159v1M746 163v1M747 158v1M747 164v1M748 158v1M748 164v1M749 158v1M749 164v1M750 157v1M750 159v1M750 163v1M751 156v1M751 160v3"/>
<path transform="translate(.5 0)" stroke="#0f0" d="M745 166v1M745 170v3M746 167v1M746 169v1M746 173v1M747 168v1M747 174v1M748 168v1M748 174v1M749 168v1M749 174v1M750 167v1M750 169v1M750 173v1M751 166v1M751 170v3"/>
<path transform="translate(.5 0)" stroke="#00f" d="M745 176v1M745 184v1M746 177v1M746 183v1M747 177v7M748 177v1M748 183v1M749 177v1M749 183v1M750 177v7M751 177v1M751 183v1M752 176v1M752 184v1"/>
<path transform="translate(0 .5)" stroke="#f00" d="M747 187h3M745 188h2M750 188h2M744 189h1M749 189h1M752 189h1M745 190h2M749 190h1M752 190h1M744 191h1M747 191h1M750 191h2M744 192h1M747 192h1M752 192h1M745 193h2M750 193h2M747 194h3"/>
<path transform="translate(.5 0)" stroke="#ff0" d="M744 196v1M745 197v7M746 196v1M747 197v7M748 196v1M749 197v6M749 204v1M750 198v1M750 203v1M751 197v6M751 204v1"/>
<path transform="translate(0 .5)" stroke="#0f0" d="M747 208h3M746 209h1M750 209h1M746 210h1M750 210h1M744 211h4M749 211h4M744 213h9"/>
<path transform="translate(0 .5)" stroke="#00f" d="M744 216h1M746 216h1M748 216h1M745 217h1M747 217h1M749 217h1M745 218h1M747 218h1M749 218h1M745 219h1M747 219h1M749 219h1M745 220h1M747 220h1M749 220h1M745 221h1M747 221h1M749 221h1M745 222h1M747 222h1M749 222h1M752 222h1M745 223h1M747 223h1M749 223h1M752 223h1M750 224h2"/>
<path transform="translate(0 .5)" stroke="#f00" d="M747 236h3M745 237h2M750 237h2M745 238h1M751 238h1M744 239h1M752 239h1M744 240h1M748 240h1M752 240h1M744 241h1M752 241h1M745 242h1M751 242h1M745 243h2M750 243h2M747 244h3"/>
<path transform="translate(.5 0)" stroke="#00f" d="M745 247v1M745 253v1M746 246v1M746 248v1M746 252v1M746 254v1M747 246v1M747 249v3M747 254v1M748 246v1M748 254v1M749 247v1M749 253v1M750 247v2M750 252v2M751 249v3"/>
<path transform="translate(.5 0)" stroke="#0f0" d="M746 256v1M746 258v3M746 263v1M747 257v1M747 261v1M747 263v1M748 257v1M748 261v4M749 257v1M749 261v1M749 263v1M750 256v1M750 258v3M750 263v1M746 267v3M746 272v1M747 266v1M747 270v1M747 272v1M748 266v1M748 270v5M749 266v1M749 270v1M749 272v1M750 267v3M750 272v1"/>
<path transform="translate(0 .5)" stroke="#f00" d="M750 276h3M751 277h2M750 278h1M752 278h1M746 279h2M749 279h1M745 280h1M748 280h1M744 281h1M749 281h1M744 282h1M749 282h1M745 283h1M748 283h1M746 284h2"/>
<path transform="translate(.5 0)" stroke="#f00" d="M745 287v1M745 292v2M746 287v1M746 290v2M746 293v1M747 288v2M747 293v1M748 293v1M749 293v1M750 287v8M751 286v1M751 293v1M752 293v1"/>
<path transform="translate(.5 0)" stroke="#ff0" d="M745 297v1M746 297v1M747 296v8M748 297v1M748 300v1M749 297v1M749 299v1M750 299v1M750 302v2M751 300v2M751 304v1"/>
<path transform="translate(.5 0)" stroke="#0f0" d="M745 306v1M745 311v1M746 307v4M747 309v1M747 312v2M748 308v5M748 314v1M749 309v1M749 312v2M750 307v4M751 306v1M751 311v1"/>
<path transform="translate(0 .5)" stroke="#00f" d="M745 316h1M748 316h1M751 316h1M744 317h2M747 317h3M751 317h2M745 318h1M748 318h1M751 318h1M746 319h1M748 319h1M750 319h1M747 320h3M748 321h1M746 322h5M748 323h1M748 324h1"/>
<path transform="translate(.5 0)" stroke="#00f" d="M745 326v3M746 329v1M746 332v1M747 327v1M747 330v1M747 332v1M748 326v1M748 328v1M748 330v5M749 327v1M749 330v1M749 332v1M750 329v1M750 332v1M751 326v3"/>
<path transform="translate(0 .5)" stroke="#008080" d="M747 336h3M746 337h1M750 337h1M745 338h1M751 338h1M745 339h1M751 339h1M745 340h1M751 340h1M746 341h1M750 341h1M745 342h2M750 342h2M744 343h1M746 343h1M750 343h1M752 343h1M745 344h1M751 344h1"/>
<text class="hn" transform="translate(93.32,357) scale(0.78,1)" fill="#f00" stroke="#f00">1</text>
<text class="hn" transform="translate(150.32,454) scale(0.78,1)" fill="#ff0" stroke="#ff0">2</text>
<text class="hn" transform="translate(255.32,510) scale(0.78,1)" fill="#0f0" stroke="#0f0">3</text>
<text class="hn" transform="translate(372.32,499) scale(0.78,1)" fill="#00f" stroke="#00f">4</text>
<text class="hn" transform="translate(460.32,435) scale(0.78,1)" fill="#f00" stroke="#f00">5</text>
<text class="hn" transform="translate(501.32,348) scale(0.78,1)" fill="#ff0" stroke="#ff0">6</text>
<text class="hn" transform="translate(499.32,251) scale(0.78,1)" fill="#0f0" stroke="#0f0">7</text>
<text class="hn" transform="translate(442.32,154) scale(0.78,1)" fill="#00f" stroke="#00f">8</text>
<text class="hn" transform="translate(337.32,98) scale(0.78,1)" fill="#f00" stroke="#f00">9</text>
<text class="hn" transform="translate(216.32,109) scale(0.78,1)" fill="#ff0" stroke="#ff0">10</text>
<text class="hn" transform="translate(128.32,173) scale(0.78,1)" fill="#0f0" stroke="#0f0">11</text>
<text class="hn" transform="translate(87.32,260) scale(0.78,1)" fill="#00f" stroke="#00f">12</text>
<path transform="translate(.5 0)" stroke="#c0c0c0" d="M599 0v600"/>
<rect x="0.5" y="0.5" width="759" height="599" stroke="#c0c0c0"/>
</svg>
<div id="s">
<div class="l" style="top:7px"><span style="color:#fff">Astrolog 5.40</span></div>
<div class="l" style="top:17px"><span style="color:#c0c0c0">"Anonymous"</span></div>
<div class="l" style="top:27px"><span style="color:#c0c0c0">Tue May 31, 2005</span></div>
<div class="l" style="top:37px"><span style="color:#c0c0c0"> 5:37pm (ST +8:00 GMT)</span></div>
<div class="l" style="top:47px"><span style="color:#c0c0c0">"Taiwan"</span></div>
<div class="l" style="top:57px"><span style="color:#c0c0c0">121°00E 25°00N</span></div>
<div class="l" style="top:67px"><span style="color:#c0c0c0">Placidus houses.</span></div>
<div class="l" style="top:77px"><span style="color:#c0c0c0">Tropical, Geocentric.</span></div>
<div class="l" style="top:87px"><span style="color:#c0c0c0">Julian Day = 2453521.9007</span></div>
<div class="l" style="top:107px"><span style="color:#f00"> 1st house: </span><span style="color:#00f">27Sco02</span></div>
<div class="l" style="top:117px"><span style="color:#ff0"> 2nd house: </span><span style="color:#f00">26Sag46</span></div>
<div class="l" style="top:127px"><span style="color:#0f0"> 3rd house: </span><span style="color:#ff0">28Cap47</span></div>
<div class="l" style="top:137px"><span style="color:#00f"> 4th house: </span><span style="color:#00f"> 2Pis15</span></div>
<div class="l" style="top:147px"><span style="color:#f00"> 5th house: </span><span style="color:#f00"> 4Ari20</span></div>
<div class="l" style="top:157px"><span style="color:#ff0"> 6th house: </span><span style="color:#ff0"> 2Tau32</span></div>
<div class="l" style="top:167px"><span style="color:#0f0"> 7th house: </span><span style="color:#ff0">27Tau02</span></div>
<div class="l" style="top:177px"><span style="color:#00f"> 8th house: </span><span style="color:#0f0">26Gem46</span></div>
<div class="l" style="top:187px"><span style="color:#f00"> 9th house: </span><span style="color:#00f">28Can47</span></div>
<div class="l" style="top:197px"><span style="color:#ff0">10th house: </span><span style="color:#ff0"> 2Vir15</span></div>
<div class="l" style="top:207px"><span style="color:#0f0">11th house: </span><span style="color:#0f0"> 4Lib20</span></div>
<div class="l" style="top:217px"><span style="color:#00f">12th house: </span><span style="color:#00f"> 2Sco32</span></div>
<div class="l" style="top:237px"><span style="color:#f00"> Sun: </span><span style="color:#0f0">10Gem02</span><span style="color:#fff"> </span><span style="color:#c0c0c0"> - 0°00'</span></div>
<div class="l" style="top:247px"><span style="color:#00f">Moon: </span><span style="color:#00f">21Pis44</span><span style="color:#fff"> </span><span style="color:#c0c0c0"> - 2°35'</span></div>
<div class="l" style="top:257px"><span style="color:#0f0">Merc: </span><span style="color:#0f0"> 6Gem21</span><span style="color:#fff"> </span><span style="color:#c0c0c0"> + 0°10'</span></div>
<div class="l" style="top:267px"><span style="color:#0f0">Venu: </span><span style="color:#0f0">26Gem03</span><span style="color:#fff"> </span><span style="color:#c0c0c0"> + 0°48'</span></div>
<div class="l" style="top:277px"><span style="color:#f00">Mars: </span><span style="color:#00f">21Pis48</span><span style="color:#fff"> </span><span style="color:#c0c0c0"> - 2°07'</span></div>
<div class="l" style="top:287px"><span style="color:#f00">Jupi: </span><span style="color:#0f0"> 8Lib58</span><span style="color:#fff">R</span><span style="color:#c0c0c0"> + 1°26'</span></div>
<div class="l" style="top:297px"><span style="color:#ff0">Satu: </span><span style="color:#00f">24Can27</span><span style="color:#fff"> </span><span style="color:#c0c0c0"> + 0°13'</span></div>
<div class="l" style="top:307px"><span style="color:#0f0">Uran: </span><span style="color:#00f">10Pis41</span><span style="color:#fff"> </span><span style="color:#c0c0c0"> - 0°46'</span></div>
<div class="l" style="top:317px"><span style="color:#00f">Nept: </span><span style="color:#0f0">17Aqu34</span><span style="color:#fff">R</span><span style="color:#c0c0c0"> - 0°07'</span></div>
<div class="l" style="top:327px"><span style="color:#00f">Plut: </span><span style="color:#f00">23Sag33</span><span style="color:#fff">R</span><span style="color:#c0c0c0"> + 8°18'</span></div>
<div class="l" style="top:337px"><span style="color:#008080">Node: </span><span style="color:#f00">20Ari22</span><span style="color:#fff">R</span><span style="color:#c0c0c0"> + 0°00'</span></div>
<div class="l" style="top:357px"><span style="color:#c0c0c0">Fire: 2, Earth: 1,</span></div>
<div class="l" style="top:367px"><span style="color:#c0c0c0">Air : 5, Water: 5</span></div>
<div class="l" style="top:377px"><span style="color:#c0c0c0">Car: 3, Fix: 2, Mut: 8</span></div>
<div class="l" style="top:387px"><span style="color:#c0c0c0">Yang: 7, Yin: 6</span></div>
<div class="l" style="top:397px"><span style="color:#c0c0c0">M: 5, N: 6, A: 3, D: 8</span></div>
<div class="l" style="top:407px"><span style="color:#c0c0c0">Ang: 7, Suc: 3, Cad: 1</span></div>
<div class="l" style="top:417px"><span style="color:#c0c0c0">Learn: 6, Share: 7</span></div>
</div>
</div></body></html>
